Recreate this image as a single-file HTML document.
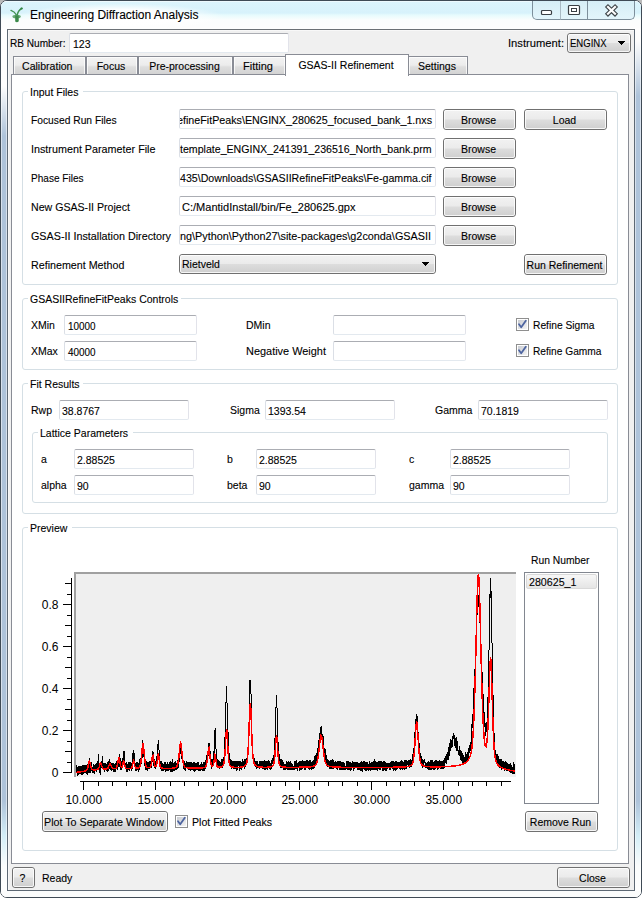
<!DOCTYPE html>
<html><head><meta charset="utf-8"><style>
html,body{margin:0;padding:0;width:642px;height:898px;overflow:hidden;background:linear-gradient(180deg,#b8b8b8 0px,#d8d8d8 20px,#fff 40px)}
*{box-sizing:border-box}
.t{position:absolute;font-family:"Liberation Sans",sans-serif;line-height:1;white-space:pre;color:#000;-webkit-text-stroke:0.1px #000}
.fit{display:inline-block;transform-origin:0 0}
#win{position:absolute;left:0;top:0;width:642px;height:898px;border:1px solid #3f4a55;border-radius:7px 7px 7px 7px;background:#fff;overflow:hidden}
#title{position:absolute;left:0;top:0;width:640px;height:28px;background:linear-gradient(180deg,#ffffff 0px,#dcf4fc 1px,#d7f2fb 12px,#e6fbfd 14px,#fbfdfd 19px,#fdfdfd 27px,#ffffff 28px)}
.strip{position:absolute;top:0;width:6px;height:898px;border-left:1px solid rgba(255,255,255,.5);border-right:1px solid rgba(255,255,255,.5)}
#sl{left:0;background:linear-gradient(180deg,#ffffff 0px,#fdfdfd 85px,#aec3da 135px,#aec3da 800px,#d4eef7 835px,#fafcfc 865px,#ffffff 898px)}
#sr{left:634px;background:linear-gradient(180deg,#ffffff 0px,#fdfdfd 40px,#aec3da 95px,#aec3da 800px,#d4eef7 835px,#fafcfc 865px,#ffffff 898px)}
#sb{position:absolute;left:0;top:890px;width:640px;height:6px;background:#fbfcfc}
#client{position:absolute;left:7px;top:29px;width:628px;height:862px;border:1px solid #5d6874;border-top-color:#6b7075;background:#f0f0f0;box-shadow:inset 1px 1px 0 #f8f8f8}
.pane{border:1px solid #898c95;background:#fff}
.tab{border:1px solid #898c95;border-bottom:none;background:linear-gradient(180deg,#f3f3f3 0%,#ececec 45%,#dedede 55%,#d2d2d2 100%)}
.ti{position:absolute;left:0;top:0;right:0;bottom:0;border:1px solid rgba(255,255,255,.75);border-bottom:none}
.tabsel{border:1px solid #898c95;border-bottom:none;background:#fff}
.grp{border:1px solid #d5dfe5;border-radius:3px}
.fld{border:1px solid;border-color:#abadb3 #e2e3ea #e3e9ef #dbdfe6;border-radius:2px;background:#fff}
.btn{border:1px solid #707070;border-radius:3px;background:linear-gradient(180deg,#f2f2f2 0%,#ebebeb 48%,#dddddd 52%,#cfcfcf 100%)}
.bi{position:absolute;left:0;top:0;right:0;bottom:0;border:1px solid rgba(255,255,255,.8);border-radius:2px}
.lst{border:1px solid #828790;background:#fff}
.item{border:1px solid #d9d9d9;border-radius:2px;background:linear-gradient(180deg,#f7f7f7,#e5e5e5)}
.cap{position:absolute;top:1px;height:19px;border:1px solid #7d8f9b;border-top:none;background:linear-gradient(180deg,#d6eef6,#e3f5fb)}
</style></head><body>
<div id="win"><div class="strip" id="sl"></div><div class="strip" id="sr"></div><div id="sb"></div><div id="title"></div><div style="position:absolute;left:14px;top:1px;width:210px;height:28px;background:radial-gradient(ellipse 50% 50% at 50% 55%,rgba(255,255,255,.95) 55%,rgba(255,255,255,0) 100%)"></div></div>
<div id="client"></div>
<svg width="0" height="0" style="position:absolute"><defs><linearGradient id="cbg" x1="0" y1="0" x2="1" y2="1"><stop offset="0" stop-color="#c9ccd2"/><stop offset="1" stop-color="#f4f4f4"/></linearGradient></defs></svg>
<div class="cap" style="left:532px;width:29px;border-radius:0 0 0 5px"></div>
<div class="cap" style="left:560px;width:28px;border-left:1px solid #a9bac4"></div>
<div class="cap" style="left:587px;width:48px;border-radius:0 0 5px 0"></div>
<svg style="position:absolute;left:540px;top:9px" width="14" height="7"><rect x="1.5" y="1.5" width="10" height="4" rx="1" fill="#fff" stroke="#3a3f44" stroke-width="1.2"/></svg>
<svg style="position:absolute;left:567px;top:4px" width="15" height="12"><rect x="1.5" y="1.5" width="11" height="9" rx="1" fill="#fff" stroke="#3a3f44" stroke-width="1.2"/><rect x="4.5" y="4.5" width="5" height="3" fill="none" stroke="#3a3f44" stroke-width="1"/></svg>
<svg style="position:absolute;left:603px;top:3px" width="17" height="15"><path d="M5 4 L12 10.8 M12 4 L5 10.8" stroke="#3d4347" stroke-width="4.4" stroke-linecap="square"/><path d="M5 4 L12 10.8 M12 4 L5 10.8" stroke="#fdfdfd" stroke-width="2.2" stroke-linecap="square"/></svg>
<svg style="position:absolute;left:6px;top:4px" width="24" height="24"><path d="M5 6.4 Q8.6 7.6 10.4 11" fill="none" stroke="#3f9150" stroke-width="1.4" stroke-linecap="round"/><path d="M15.8 4.3 Q12 6.5 11.2 11" fill="none" stroke="#3f9150" stroke-width="1.5" stroke-linecap="round"/><ellipse cx="15.6" cy="4.5" rx="1.2" ry="0.9" fill="#2f8544"/><ellipse cx="10.6" cy="12.6" rx="4.2" ry="1.9" fill="#4f9a5c" opacity="0.85"/><path d="M9.2 11.5 H12.6 L12.8 17.3 Q11 18.8 9.2 17.6 Z" fill="#3b8a4a"/></svg>
<div class="t" style="left:30px;top:8.54px;font-size:12px">Engineering Diffraction Analysis</div><div class="tab" style="position:absolute;left:13px;top:56px;width:73px;height:19px;"><div class="ti"></div></div>
<div class="t" style="left:21.7px;top:60.51px;font-size:10.5px;color:#000;"><span class="fit" style="transform:scaleX(1.00591)">Calibration</span></div>
<div class="tab" style="position:absolute;left:86px;top:56px;width:52px;height:19px;"><div class="ti"></div></div>
<div class="t" style="left:-39.0px;width:300px;text-align:center;top:60.51px;font-size:10.5px;color:#000;">Focus</div>
<div class="tab" style="position:absolute;left:138px;top:56px;width:95px;height:19px;"><div class="ti"></div></div>
<div class="t" style="left:34.5px;width:300px;text-align:center;top:60.51px;font-size:10.5px;color:#000;">Pre-processing</div>
<div class="tab" style="position:absolute;left:233px;top:56px;width:53px;height:19px;"><div class="ti"></div></div>
<div class="t" style="left:243.4px;top:60.51px;font-size:10.5px;color:#000;"><span class="fit" style="transform:scaleX(1.04918)">Fitting</span></div>
<div class="tab" style="position:absolute;left:408px;top:56px;width:60px;height:19px;"><div class="ti"></div></div>
<div class="t" style="left:287.0px;width:300px;text-align:center;top:60.51px;font-size:10.5px;color:#000;">Settings</div>
<div class="pane" style="position:absolute;left:11px;top:74px;width:618px;height:790px;"></div>
<div class="tabsel" style="position:absolute;left:285px;top:54px;width:124px;height:22px;"></div>
<div class="t" style="left:196.0px;width:300px;text-align:center;top:59.51px;font-size:10.5px;color:#000;">GSAS-II Refinement</div>
<div class="t" style="left:10px;top:37.51px;font-size:10.5px;color:#000;"><span class="fit" style="transform:scaleX(0.960779)">RB Number:</span></div>
<div class="fld" style="position:absolute;left:69px;top:33px;width:220px;height:20px;"></div>
<div class="t" style="left:73px;top:38.51px;font-size:10.5px;color:#000;">123</div>
<div class="t" style="left:508px;top:37.51px;font-size:10.5px;color:#000;"><span class="fit" style="transform:scaleX(1.06603)">Instrument:</span></div>
<div class="btn" style="position:absolute;left:567px;top:33px;width:64px;height:20px;"><div class="bi"></div></div>
<div class="t" style="left:570px;top:37.51px;font-size:10.5px;color:#000;"><span class="fit" style="transform:scaleX(0.90648)">ENGINX</span></div>
<svg style="position:absolute;left:618px;top:41px" width="8" height="5" shape-rendering="crispEdges"><path d="M0 0 H7 V1 H6 V2 H5 V3 H4 V4 H3 V3 H2 V2 H1 V1 H0 Z" fill="#000"/></svg>
<div class="grp" style="position:absolute;left:22px;top:91px;width:596px;height:194px;"></div>
<div class="" style="position:absolute;left:28px;top:90px;width:55px;height:3px;background:#fff"></div>
<div class="t" style="left:30px;top:86.51px;font-size:10.5px;color:#000;">Input Files</div>
<div class="t" style="left:31px;top:114.51px;font-size:10.5px;color:#000;"><span class="fit" style="transform:scaleX(0.977762)">Focused Run Files</span></div>
<div class="fld" style="position:absolute;left:179px;top:109px;width:257px;height:20px;"></div>
<div style="position:absolute;left:180px;top:110px;width:255px;height:18px;overflow:hidden"><div class="t" style="left:-3.5px;top:4.51px;font-size:10.5px"><span class="fit" style="transform:scaleX(1.0207)">efineFitPeaks\ENGINX_280625_focused_bank_1.nxs</span></div></div>
<div class="btn" style="position:absolute;left:443px;top:109px;width:73px;height:21px;"><div class="bi"></div></div>
<div class="t" style="left:328.5px;width:300px;text-align:center;top:114.51px;font-size:10.5px;color:#000;">Browse</div>
<div class="t" style="left:31px;top:143.51px;font-size:10.5px;color:#000;"><span class="fit" style="transform:scaleX(1.02561)">Instrument Parameter File</span></div>
<div class="fld" style="position:absolute;left:179px;top:138px;width:257px;height:20px;"></div>
<div style="position:absolute;left:180px;top:139px;width:255px;height:18px;overflow:hidden"><div class="t" style="left:0px;top:4.51px;font-size:10.5px"><span class="fit" style="transform:scaleX(1.00903)">template_ENGINX_241391_236516_North_bank.prm</span></div></div>
<div class="btn" style="position:absolute;left:443px;top:138px;width:73px;height:21px;"><div class="bi"></div></div>
<div class="t" style="left:328.5px;width:300px;text-align:center;top:143.51px;font-size:10.5px;color:#000;">Browse</div>
<div class="t" style="left:31px;top:172.51px;font-size:10.5px;color:#000;"><span class="fit" style="transform:scaleX(0.956992)">Phase Files</span></div>
<div class="fld" style="position:absolute;left:179px;top:167px;width:257px;height:20px;"></div>
<div style="position:absolute;left:180px;top:168px;width:255px;height:18px;overflow:hidden"><div class="t" style="left:0px;top:4.51px;font-size:10.5px"><span class="fit" style="transform:scaleX(1.01163)">435\Downloads\GSASIIRefineFitPeaks\Fe-gamma.cif</span></div></div>
<div class="btn" style="position:absolute;left:443px;top:167px;width:73px;height:21px;"><div class="bi"></div></div>
<div class="t" style="left:328.5px;width:300px;text-align:center;top:172.51px;font-size:10.5px;color:#000;">Browse</div>
<div class="t" style="left:31px;top:201.51px;font-size:10.5px;color:#000;"><span class="fit" style="transform:scaleX(1.00988)">New GSAS-II Project</span></div>
<div class="fld" style="position:absolute;left:179px;top:196px;width:257px;height:20px;"></div>
<div class="t" style="left:182px;top:201.51px;font-size:10.5px;color:#000;"><span class="fit" style="transform:scaleX(1.05032)">C:/MantidInstall/bin/Fe_280625.gpx</span></div>
<div class="btn" style="position:absolute;left:443px;top:196px;width:73px;height:21px;"><div class="bi"></div></div>
<div class="t" style="left:328.5px;width:300px;text-align:center;top:201.51px;font-size:10.5px;color:#000;">Browse</div>
<div class="t" style="left:31px;top:230.51px;font-size:10.5px;color:#000;"><span class="fit" style="transform:scaleX(1.02529)">GSAS-II Installation Directory</span></div>
<div class="fld" style="position:absolute;left:179px;top:225px;width:257px;height:20px;"></div>
<div style="position:absolute;left:180px;top:226px;width:255px;height:18px;overflow:hidden"><div class="t" style="left:0px;top:4.51px;font-size:10.5px"><span class="fit" style="transform:scaleX(1.03113)">ng\Python\Python27\site-packages\g2conda\GSASII</span></div></div>
<div class="btn" style="position:absolute;left:443px;top:225px;width:73px;height:21px;"><div class="bi"></div></div>
<div class="t" style="left:328.5px;width:300px;text-align:center;top:230.51px;font-size:10.5px;color:#000;">Browse</div>
<div class="btn" style="position:absolute;left:524px;top:109px;width:83px;height:21px;"><div class="bi"></div></div>
<div class="t" style="left:414.5px;width:300px;text-align:center;top:114.51px;font-size:10.5px;color:#000;">Load</div>
<div class="t" style="left:31px;top:259.51px;font-size:10.5px;color:#000;"><span class="fit" style="transform:scaleX(1.0192)">Refinement Method</span></div>
<div class="btn" style="position:absolute;left:179px;top:254px;width:257px;height:20px;"><div class="bi"></div></div>
<div class="t" style="left:182px;top:258.51px;font-size:10.5px;color:#000;">Rietveld</div>
<svg style="position:absolute;left:422px;top:262px" width="8" height="5" shape-rendering="crispEdges"><path d="M0 0 H7 V1 H6 V2 H5 V3 H4 V4 H3 V3 H2 V2 H1 V1 H0 Z" fill="#000"/></svg>
<div class="btn" style="position:absolute;left:524px;top:254px;width:83px;height:21px;"><div class="bi"></div></div>
<div class="t" style="left:414.5px;width:300px;text-align:center;top:259.51px;font-size:10.5px;color:#000;">Run Refinement</div>
<div class="grp" style="position:absolute;left:22px;top:298px;width:596px;height:72px;"></div>
<div class="" style="position:absolute;left:28px;top:297px;width:153px;height:3px;background:#fff"></div>
<div class="t" style="left:30px;top:293.51px;font-size:10.5px;color:#000;">GSASIIRefineFitPeaks Controls</div>
<div class="t" style="left:31px;top:319.51px;font-size:10.5px;color:#000;">XMin</div>
<div class="fld" style="position:absolute;left:64px;top:315px;width:133px;height:20px;"></div>
<div class="t" style="left:68px;top:320.51px;font-size:10.5px;color:#000;"><span class="fit" style="transform:scaleX(0.945104)">10000</span></div>
<div class="t" style="left:31px;top:345.51px;font-size:10.5px;color:#000;">XMax</div>
<div class="fld" style="position:absolute;left:64px;top:341px;width:133px;height:20px;"></div>
<div class="t" style="left:68px;top:346.51px;font-size:10.5px;color:#000;"><span class="fit" style="transform:scaleX(0.945104)">40000</span></div>
<div class="t" style="left:246px;top:319.51px;font-size:10.5px;color:#000;">DMin</div>
<div class="fld" style="position:absolute;left:333px;top:315px;width:133px;height:20px;"></div>
<div class="t" style="left:246px;top:345.51px;font-size:10.5px;color:#000;"><span class="fit" style="transform:scaleX(1.04086)">Negative Weight</span></div>
<div class="fld" style="position:absolute;left:333px;top:341px;width:133px;height:20px;"></div>
<svg style="position:absolute;left:516px;top:318px" width="13" height="13" viewBox="0 0 13 13" shape-rendering="crispEdges">
<rect x="0.5" y="0.5" width="12" height="12" fill="#fff" stroke="#8f8f8f"/>
<rect x="2" y="2" width="9" height="9" fill="url(#cbg)"/>
<path d="M3 6.3 L5.2 9.3 L9.8 2.8" fill="none" stroke="#4d64a0" stroke-width="1.8" stroke-linejoin="round" stroke-linecap="round" shape-rendering="auto"/>
</svg>
<div class="t" style="left:533px;top:319.51px;font-size:10.5px;color:#000;"><span class="fit" style="transform:scaleX(0.975706)">Refine Sigma</span></div>
<svg style="position:absolute;left:516px;top:344px" width="13" height="13" viewBox="0 0 13 13" shape-rendering="crispEdges">
<rect x="0.5" y="0.5" width="12" height="12" fill="#fff" stroke="#8f8f8f"/>
<rect x="2" y="2" width="9" height="9" fill="url(#cbg)"/>
<path d="M3 6.3 L5.2 9.3 L9.8 2.8" fill="none" stroke="#4d64a0" stroke-width="1.8" stroke-linejoin="round" stroke-linecap="round" shape-rendering="auto"/>
</svg>
<div class="t" style="left:533px;top:345.51px;font-size:10.5px;color:#000;"><span class="fit" style="transform:scaleX(0.970126)">Refine Gamma</span></div>
<div class="grp" style="position:absolute;left:22px;top:383px;width:596px;height:131px;"></div>
<div class="" style="position:absolute;left:28px;top:382px;width:55px;height:3px;background:#fff"></div>
<div class="t" style="left:30px;top:378.51px;font-size:10.5px;color:#000;">Fit Results</div>
<div class="t" style="left:31px;top:404.51px;font-size:10.5px;color:#000;">Rwp</div>
<div class="fld" style="position:absolute;left:59px;top:400px;width:130px;height:20px;"></div>
<div class="t" style="left:62px;top:405.51px;font-size:10.5px;color:#000;">38.8767</div>
<div class="t" style="left:230px;top:404.51px;font-size:10.5px;color:#000;">Sigma</div>
<div class="fld" style="position:absolute;left:265px;top:400px;width:130px;height:20px;"></div>
<div class="t" style="left:268px;top:405.51px;font-size:10.5px;color:#000;">1393.54</div>
<div class="t" style="left:435px;top:404.51px;font-size:10.5px;color:#000;">Gamma</div>
<div class="fld" style="position:absolute;left:478px;top:400px;width:130px;height:20px;"></div>
<div class="t" style="left:481px;top:405.51px;font-size:10.5px;color:#000;">70.1819</div>
<div class="grp" style="position:absolute;left:32px;top:432px;width:576px;height:71px;"></div>
<div class="" style="position:absolute;left:38px;top:431px;width:95px;height:3px;background:#fff"></div>
<div class="t" style="left:40px;top:427.51px;font-size:10.5px;color:#000;">Lattice Parameters</div>
<div class="t" style="left:41px;top:453.51px;font-size:10.5px;color:#000;">a</div>
<div class="fld" style="position:absolute;left:74px;top:449px;width:120px;height:20px;"></div>
<div class="t" style="left:77px;top:454.51px;font-size:10.5px;color:#000;">2.88525</div>
<div class="t" style="left:41px;top:479.51px;font-size:10.5px;color:#000;">alpha</div>
<div class="fld" style="position:absolute;left:74px;top:475px;width:120px;height:20px;"></div>
<div class="t" style="left:77px;top:480.51px;font-size:10.5px;color:#000;">90</div>
<div class="t" style="left:227px;top:453.51px;font-size:10.5px;color:#000;">b</div>
<div class="fld" style="position:absolute;left:256px;top:449px;width:120px;height:20px;"></div>
<div class="t" style="left:259px;top:454.51px;font-size:10.5px;color:#000;">2.88525</div>
<div class="t" style="left:227px;top:479.51px;font-size:10.5px;color:#000;">beta</div>
<div class="fld" style="position:absolute;left:256px;top:475px;width:120px;height:20px;"></div>
<div class="t" style="left:259px;top:480.51px;font-size:10.5px;color:#000;">90</div>
<div class="t" style="left:409px;top:453.51px;font-size:10.5px;color:#000;">c</div>
<div class="fld" style="position:absolute;left:450px;top:449px;width:120px;height:20px;"></div>
<div class="t" style="left:453px;top:454.51px;font-size:10.5px;color:#000;">2.88525</div>
<div class="t" style="left:409px;top:479.51px;font-size:10.5px;color:#000;">gamma</div>
<div class="fld" style="position:absolute;left:450px;top:475px;width:120px;height:20px;"></div>
<div class="t" style="left:453px;top:480.51px;font-size:10.5px;color:#000;">90</div>
<div class="grp" style="position:absolute;left:22px;top:527px;width:596px;height:324px;"></div>
<div class="" style="position:absolute;left:28px;top:526px;width:44px;height:3px;background:#fff"></div>
<div class="t" style="left:30px;top:522.51px;font-size:10.5px;color:#000;">Preview</div>
<div class="t" style="left:531px;top:554.51px;font-size:10.5px;color:#000;"><span class="fit" style="transform:scaleX(0.982677)">Run Number</span></div>
<div class="lst" style="position:absolute;left:524px;top:572px;width:75px;height:232px;"></div>
<div class="item" style="position:absolute;left:526px;top:574px;width:71px;height:15px;"></div>
<div class="t" style="left:529px;top:576.51px;font-size:10.5px;color:#000;"><span class="fit" style="transform:scaleX(1.01672)">280625_1</span></div>
<div class="btn" style="position:absolute;left:525px;top:811px;width:73px;height:21px;"><div class="bi"></div></div>
<div class="t" style="left:410.5px;width:300px;text-align:center;top:816.51px;font-size:10.5px;color:#000;">Remove Run</div>
<div class="btn" style="position:absolute;left:42px;top:811px;width:126px;height:21px;"><div class="bi"></div></div>
<div class="t" style="left:44px;top:816.51px;font-size:10.5px;color:#000;"><span class="fit" style="transform:scaleX(1.01938)">Plot To Separate Window</span></div>
<svg style="position:absolute;left:175px;top:815px" width="13" height="13" viewBox="0 0 13 13" shape-rendering="crispEdges">
<rect x="0.5" y="0.5" width="12" height="12" fill="#fff" stroke="#8f8f8f"/>
<rect x="2" y="2" width="9" height="9" fill="url(#cbg)"/>
<path d="M3 6.3 L5.2 9.3 L9.8 2.8" fill="none" stroke="#4d64a0" stroke-width="1.8" stroke-linejoin="round" stroke-linecap="round" shape-rendering="auto"/>
</svg>
<div class="t" style="left:192px;top:816.51px;font-size:10.5px;color:#000;"><span class="fit" style="transform:scaleX(1.00787)">Plot Fitted Peaks</span></div>
<div class="btn" style="position:absolute;left:12px;top:867px;width:23px;height:21px;"><div class="bi"></div></div>
<div class="t" style="left:-127.5px;width:300px;text-align:center;top:872.51px;font-size:10.5px;color:#000;">?</div>
<div class="t" style="left:42px;top:872.51px;font-size:10.5px;color:#000;">Ready</div>
<div class="btn" style="position:absolute;left:557px;top:867px;width:73px;height:21px;"><div class="bi"></div></div>
<div class="t" style="left:442.5px;width:300px;text-align:center;top:872.51px;font-size:10.5px;color:#000;">Close</div><svg style="position:absolute;left:0;top:0" width="642" height="898"><g font-family="Liberation Sans" font-size="12"><rect x="74" y="572" width="442" height="205" fill="#efefef"/><rect x="74" y="572" width="442" height="2" fill="#a0a0a0"/><rect x="74" y="572" width="2" height="205" fill="#a0a0a0"/><rect x="71" y="578" width="1" height="195" fill="#000"/><rect x="63" y="772" width="8" height="1" fill="#000"/><rect x="67" y="762" width="4" height="1" fill="#000"/><rect x="65" y="751" width="6" height="1" fill="#000"/><rect x="67" y="741" width="4" height="1" fill="#000"/><rect x="63" y="730" width="8" height="1" fill="#000"/><rect x="67" y="720" width="4" height="1" fill="#000"/><rect x="65" y="709" width="6" height="1" fill="#000"/><rect x="67" y="699" width="4" height="1" fill="#000"/><rect x="63" y="688" width="8" height="1" fill="#000"/><rect x="67" y="678" width="4" height="1" fill="#000"/><rect x="65" y="667" width="6" height="1" fill="#000"/><rect x="67" y="657" width="4" height="1" fill="#000"/><rect x="63" y="646" width="8" height="1" fill="#000"/><rect x="67" y="636" width="4" height="1" fill="#000"/><rect x="65" y="625" width="6" height="1" fill="#000"/><rect x="67" y="615" width="4" height="1" fill="#000"/><rect x="63" y="604" width="8" height="1" fill="#000"/><rect x="67" y="594" width="4" height="1" fill="#000"/><rect x="65" y="583" width="6" height="1" fill="#000"/><text x="58.5" y="776.9" text-anchor="end">0</text><text x="58.5" y="734.9" text-anchor="end">0.2</text><text x="58.5" y="692.9" text-anchor="end">0.4</text><text x="58.5" y="650.9" text-anchor="end">0.6</text><text x="58.5" y="608.9" text-anchor="end">0.8</text><rect x="80" y="781" width="431" height="1" fill="#000"/><rect x="83" y="781" width="1" height="9" fill="#000"/><rect x="98" y="781" width="1" height="5" fill="#000"/><rect x="112" y="781" width="1" height="5" fill="#000"/><rect x="126" y="781" width="1" height="5" fill="#000"/><rect x="141" y="781" width="1" height="5" fill="#000"/><rect x="155" y="781" width="1" height="9" fill="#000"/><rect x="170" y="781" width="1" height="5" fill="#000"/><rect x="184" y="781" width="1" height="5" fill="#000"/><rect x="198" y="781" width="1" height="5" fill="#000"/><rect x="213" y="781" width="1" height="5" fill="#000"/><rect x="227" y="781" width="1" height="9" fill="#000"/><rect x="242" y="781" width="1" height="5" fill="#000"/><rect x="256" y="781" width="1" height="5" fill="#000"/><rect x="270" y="781" width="1" height="5" fill="#000"/><rect x="285" y="781" width="1" height="5" fill="#000"/><rect x="299" y="781" width="1" height="9" fill="#000"/><rect x="314" y="781" width="1" height="5" fill="#000"/><rect x="328" y="781" width="1" height="5" fill="#000"/><rect x="342" y="781" width="1" height="5" fill="#000"/><rect x="357" y="781" width="1" height="5" fill="#000"/><rect x="371" y="781" width="1" height="9" fill="#000"/><rect x="386" y="781" width="1" height="5" fill="#000"/><rect x="400" y="781" width="1" height="5" fill="#000"/><rect x="414" y="781" width="1" height="5" fill="#000"/><rect x="429" y="781" width="1" height="5" fill="#000"/><rect x="443" y="781" width="1" height="9" fill="#000"/><rect x="458" y="781" width="1" height="5" fill="#000"/><rect x="472" y="781" width="1" height="5" fill="#000"/><rect x="486" y="781" width="1" height="5" fill="#000"/><rect x="501" y="781" width="1" height="5" fill="#000"/><text x="83.8" y="804" text-anchor="middle">10.000</text><text x="155.8" y="804" text-anchor="middle">15.000</text><text x="227.8" y="804" text-anchor="middle">20.000</text><text x="299.8" y="804" text-anchor="middle">25.000</text><text x="371.8" y="804" text-anchor="middle">30.000</text><text x="443.8" y="804" text-anchor="middle">35.000</text><polyline points="76.00,769.21 76.12,772.47 76.24,771.31 76.36,766.51 76.48,766.29 76.60,766.60 76.72,770.13 76.84,767.11 76.96,772.14 77.08,771.62 77.20,775.60 77.32,774.41 77.44,767.24 77.56,768.87 77.68,767.57 77.80,772.15 77.92,771.22 78.04,766.32 78.16,772.52 78.28,768.84 78.40,770.21 78.52,773.62 78.64,768.09 78.76,770.89 78.88,772.92 79.00,775.42 79.12,769.77 79.24,767.09 79.36,765.95 79.48,773.20 79.60,774.30 79.72,772.48 79.84,771.31 79.96,773.90 80.08,770.22 80.20,766.06 80.32,771.92 80.44,773.66 80.56,769.27 80.68,765.61 80.80,767.06 80.92,765.95 81.04,766.64 81.16,769.25 81.28,766.12 81.40,770.80 81.52,773.50 81.64,768.06 81.76,768.85 81.88,774.84 82.00,766.98 82.12,767.54 82.24,771.10 82.36,765.20 82.48,768.86 82.60,774.70 82.72,770.29 82.84,771.89 82.96,774.12 83.08,773.85 83.20,768.99 83.32,766.07 83.44,765.64 83.56,767.09 83.68,768.40 83.80,764.96 83.92,765.96 84.04,765.18 84.16,771.09 84.28,767.43 84.40,768.54 84.52,773.40 84.64,769.53 84.76,765.67 84.88,768.24 85.00,773.14 85.12,764.98 85.24,770.06 85.36,770.19 85.48,770.02 85.60,773.40 85.72,767.27 85.84,766.29 85.96,769.98 86.08,767.89 86.20,772.77 86.32,773.17 86.44,772.79 86.56,766.69 86.68,767.97 86.80,764.54 86.92,766.87 87.04,774.06 87.16,773.82 87.28,773.97 87.40,766.11 87.52,765.74 87.64,770.24 87.76,772.51 87.88,770.35 88.00,763.84 88.12,773.05 88.24,771.11 88.36,764.25 88.48,765.87 88.60,773.46 88.72,766.32 88.84,770.21 88.96,762.51 89.08,772.32 89.20,762.46 89.32,773.22 89.44,765.01 89.56,758.28 89.68,768.95 89.80,772.63 89.92,771.89 90.04,763.73 90.16,764.92 90.28,768.64 90.40,766.78 90.52,772.66 90.64,767.52 90.76,772.70 90.88,772.90 91.00,768.68 91.12,763.18 91.24,761.69 91.36,765.07 91.48,771.00 91.60,766.84 91.72,769.28 91.84,764.64 91.96,766.15 92.08,771.57 92.20,769.41 92.32,773.01 92.44,769.94 92.56,768.91 92.68,768.30 92.80,768.55 92.92,770.79 93.04,773.25 93.16,769.36 93.28,772.19 93.40,764.90 93.52,764.40 93.64,764.39 93.76,771.56 93.88,765.19 94.00,770.28 94.12,772.51 94.24,765.81 94.36,767.60 94.48,773.54 94.60,765.18 94.72,768.73 94.84,765.49 94.96,768.11 95.08,765.92 95.20,769.74 95.32,764.09 95.44,771.35 95.56,764.45 95.68,763.76 95.80,766.06 95.92,767.56 96.04,771.53 96.16,764.74 96.28,768.95 96.40,764.05 96.52,770.06 96.64,763.77 96.76,769.40 96.88,763.71 97.00,763.42 97.12,767.22 97.24,768.03 97.36,764.76 97.48,767.06 97.60,762.01 97.72,760.55 97.84,762.48 97.96,766.61 98.08,762.46 98.20,757.71 98.32,754.27 98.44,760.61 98.56,759.63 98.68,755.48 98.80,760.60 98.92,766.62 99.04,763.82 99.16,770.28 99.28,769.49 99.40,768.08 99.52,765.38 99.64,763.26 99.76,770.88 99.88,764.15 100.00,772.59 100.12,770.67 100.24,765.35 100.36,768.20 100.48,768.07 100.60,774.77 100.72,769.33 100.84,774.61 100.96,764.46 101.08,767.87 101.20,764.13 101.32,761.34 101.44,761.87 101.56,760.66 101.68,762.94 101.80,765.26 101.92,766.30 102.04,765.02 102.16,760.15 102.28,767.51 102.40,764.21 102.52,756.03 102.64,767.43 102.76,766.27 102.88,760.18 103.00,765.18 103.12,769.12 103.24,767.21 103.36,768.62 103.48,764.18 103.60,763.40 103.72,763.27 103.84,768.01 103.96,768.76 104.08,764.02 104.20,770.07 104.32,767.93 104.44,763.21 104.56,765.11 104.68,765.26 104.80,764.66 104.92,772.44 105.04,766.46 105.16,769.50 105.28,768.83 105.40,763.40 105.52,765.17 105.64,765.68 105.76,762.73 105.88,765.31 106.00,769.58 106.12,765.52 106.24,767.27 106.36,763.76 106.48,764.56 106.60,769.64 106.72,770.83 106.84,767.05 106.96,764.59 107.08,764.56 107.20,763.82 107.32,772.08 107.44,770.69 107.56,771.33 107.68,764.49 107.80,767.05 107.92,761.90 108.04,766.46 108.16,763.02 108.28,764.71 108.40,761.09 108.52,770.04 108.64,770.83 108.76,770.37 108.88,764.06 109.00,771.10 109.12,763.28 109.24,761.90 109.36,759.41 109.48,761.35 109.60,760.60 109.72,763.72 109.84,761.80 109.96,768.36 110.08,765.08 110.20,769.17 110.32,766.44 110.44,766.79 110.56,767.26 110.68,761.77 110.80,769.85 110.92,764.67 111.04,762.94 111.16,771.04 111.28,767.60 111.40,766.72 111.52,762.65 111.64,763.33 111.76,766.63 111.88,771.12 112.00,766.40 112.12,763.82 112.24,765.48 112.36,764.49 112.48,767.96 112.60,769.85 112.72,766.45 112.84,766.10 112.96,762.92 113.08,772.15 113.20,767.44 113.32,771.10 113.44,765.10 113.56,766.42 113.68,772.03 113.80,771.21 113.92,762.71 114.04,771.43 114.16,766.13 114.28,771.73 114.40,771.00 114.52,764.87 114.64,763.92 114.76,769.23 114.88,769.62 115.00,770.04 115.12,767.87 115.24,770.19 115.36,771.57 115.48,765.30 115.60,764.74 115.72,769.25 115.84,762.82 115.96,767.99 116.08,764.27 116.20,762.02 116.32,766.55 116.44,768.35 116.56,766.49 116.68,763.98 116.80,768.59 116.92,761.21 117.04,767.88 117.16,763.15 117.28,770.06 117.40,759.97 117.52,763.81 117.64,760.85 117.76,766.54 117.88,759.84 118.00,760.51 118.12,758.96 118.24,764.90 118.36,766.84 118.48,756.76 118.60,759.29 118.72,765.89 118.84,758.55 118.96,766.09 119.08,754.26 119.20,758.94 119.32,765.53 119.44,767.32 119.56,759.47 119.68,767.37 119.80,757.03 119.92,761.69 120.04,761.65 120.16,758.41 120.28,762.79 120.40,760.67 120.52,761.95 120.64,768.85 120.76,764.91 120.88,765.54 121.00,770.35 121.12,764.66 121.24,761.28 121.36,769.39 121.48,761.45 121.60,761.65 121.72,763.54 121.84,769.99 121.96,763.31 122.08,766.60 122.20,767.27 122.32,758.84 122.44,768.38 122.56,768.00 122.68,759.29 122.80,766.47 122.92,758.83 123.04,758.13 123.16,763.00 123.28,760.39 123.40,759.71 123.52,756.23 123.64,752.10 123.76,758.11 123.88,750.96 124.00,752.42 124.12,750.84 124.24,755.69 124.36,763.62 124.48,757.49 124.60,756.76 124.72,764.72 124.84,760.36 124.96,765.34 125.08,767.32 125.20,766.93 125.32,769.17 125.44,766.63 125.56,768.64 125.68,763.80 125.80,763.00 125.92,767.46 126.04,765.70 126.16,766.90 126.28,770.01 126.40,771.91 126.52,766.72 126.64,770.45 126.76,762.40 126.88,763.23 127.00,771.86 127.12,771.45 127.24,770.82 127.36,764.73 127.48,771.65 127.60,768.14 127.72,764.34 127.84,763.58 127.96,764.73 128.08,768.72 128.20,762.30 128.32,769.00 128.44,765.32 128.56,770.17 128.68,762.82 128.80,766.15 128.92,768.60 129.04,763.82 129.16,766.28 129.28,765.25 129.40,765.29 129.52,765.73 129.64,770.82 129.76,765.77 129.88,769.42 130.00,762.13 130.12,766.32 130.24,766.12 130.36,766.65 130.48,762.12 130.60,768.40 130.72,762.79 130.84,765.60 130.96,763.27 131.08,767.02 131.20,762.76 131.32,769.75 131.44,763.46 131.56,770.94 131.68,766.06 131.80,770.41 131.92,769.92 132.04,768.75 132.16,767.91 132.28,763.29 132.40,767.20 132.52,759.67 132.64,762.04 132.76,756.43 132.88,762.27 133.00,752.87 133.12,760.40 133.24,760.38 133.36,756.49 133.48,756.26 133.60,753.36 133.72,753.64 133.84,754.51 133.96,750.08 134.08,757.05 134.20,761.54 134.32,759.06 134.44,760.40 134.56,757.57 134.68,758.19 134.80,763.63 134.92,765.67 135.04,767.24 135.16,765.34 135.28,765.62 135.40,770.51 135.52,769.74 135.64,768.61 135.76,763.23 135.88,766.37 136.00,770.75 136.12,769.50 136.24,762.22 136.36,769.25 136.48,770.69 136.60,769.89 136.72,766.74 136.84,763.78 136.96,766.80 137.08,762.07 137.20,763.33 137.32,768.55 137.44,763.40 137.56,762.85 137.68,768.09 137.80,770.47 137.92,767.50 138.04,762.68 138.16,767.96 138.28,769.63 138.40,771.56 138.52,765.15 138.64,765.95 138.76,768.96 138.88,769.69 139.00,767.81 139.12,767.21 139.24,763.27 139.36,762.63 139.48,765.41 139.60,770.03 139.72,763.09 139.84,758.77 139.96,761.51 140.08,762.51 140.20,766.03 140.32,766.11 140.44,760.68 140.56,761.41 140.68,759.38 140.80,767.05 140.92,761.47 141.04,756.56 141.16,761.74 141.28,761.81 141.40,764.14 141.52,755.40 141.64,751.91 141.76,754.88 141.88,749.54 142.00,747.66 142.12,757.59 142.24,747.29 142.36,749.90 142.48,752.70 142.60,745.36 142.72,741.24 142.84,750.22 142.96,739.90 143.08,749.55 143.20,749.82 143.32,743.75 143.44,744.66 143.56,746.99 143.68,752.60 143.80,753.97 143.92,753.27 144.04,757.32 144.16,752.37 144.28,761.70 144.40,760.02 144.52,755.57 144.64,764.47 144.76,758.54 144.88,759.40 145.00,766.38 145.12,764.70 145.24,768.28 145.36,767.28 145.48,767.88 145.60,766.84 145.72,762.83 145.84,766.35 145.96,769.53 146.08,760.65 146.20,770.04 146.32,762.13 146.44,761.23 146.56,767.36 146.68,768.49 146.80,767.07 146.92,769.43 147.04,770.22 147.16,770.03 147.28,770.84 147.40,763.40 147.52,761.70 147.64,769.58 147.76,769.73 147.88,764.32 148.00,762.42 148.12,763.51 148.24,765.73 148.36,764.05 148.48,768.68 148.60,764.70 148.72,766.54 148.84,767.69 148.96,765.61 149.08,769.24 149.20,768.53 149.32,763.57 149.44,762.26 149.56,761.43 149.68,769.01 149.80,761.24 149.92,766.14 150.04,762.93 150.16,764.49 150.28,763.48 150.40,763.57 150.52,767.70 150.64,761.35 150.76,760.77 150.88,766.96 151.00,765.88 151.12,763.04 151.24,767.90 151.36,767.40 151.48,759.21 151.60,766.43 151.72,759.75 151.84,757.27 151.96,760.02 152.08,761.97 152.20,756.25 152.32,753.09 152.44,758.91 152.56,752.11 152.68,759.61 152.80,751.09 152.92,761.04 153.04,752.35 153.16,759.37 153.28,752.99 153.40,754.88 153.52,759.01 153.64,757.42 153.76,765.84 153.88,756.33 154.00,757.08 154.12,767.68 154.24,765.39 154.36,759.99 154.48,759.51 154.60,762.93 154.72,763.37 154.84,766.72 154.96,766.28 155.08,761.34 155.20,764.18 155.32,769.43 155.44,766.03 155.56,764.46 155.68,767.50 155.80,767.95 155.92,768.63 156.04,766.31 156.16,762.70 156.28,760.16 156.40,766.82 156.52,764.72 156.64,761.90 156.76,763.18 156.88,762.78 157.00,756.26 157.12,761.44 157.24,756.68 157.36,749.75 157.48,749.23 157.60,756.56 157.72,744.43 157.84,747.98 157.96,745.98 158.08,748.78 158.20,742.59 158.32,739.79 158.44,742.58 158.56,740.11 158.68,744.56 158.80,745.33 158.92,744.12 159.04,751.08 159.16,752.24 159.28,752.65 159.40,762.43 159.52,755.90 159.64,759.15 159.76,757.49 159.88,765.70 160.00,762.89 160.12,761.00 160.24,762.85 160.36,768.07 160.48,764.79 160.60,765.88 160.72,769.00 160.84,769.33 160.96,764.64 161.08,765.26 161.20,761.07 161.32,763.98 161.44,764.26 161.56,765.61 161.68,767.99 161.80,770.76 161.92,762.01 162.04,770.61 162.16,762.94 162.28,766.90 162.40,771.17 162.52,764.14 162.64,763.09 162.76,769.48 162.88,763.24 163.00,769.68 163.12,770.70 163.24,769.61 163.36,770.76 163.48,770.22 163.60,768.77 163.72,769.28 163.84,770.70 163.96,764.51 164.08,763.26 164.20,762.46 164.32,763.33 164.44,766.89 164.56,767.04 164.68,766.60 164.80,768.58 164.92,765.68 165.04,771.55 165.16,768.31 165.28,762.22 165.40,768.78 165.52,765.26 165.64,767.07 165.76,770.95 165.88,769.15 166.00,765.35 166.12,765.63 166.24,767.23 166.36,764.08 166.48,766.20 166.60,770.26 166.72,770.27 166.84,767.02 166.96,767.05 167.08,768.54 167.20,765.29 167.32,764.98 167.44,768.34 167.56,762.38 167.68,770.85 167.80,762.48 167.92,762.04 168.04,771.21 168.16,768.57 168.28,771.09 168.40,768.16 168.52,768.95 168.64,768.80 168.76,768.66 168.88,769.61 169.00,763.79 169.12,769.73 169.24,768.54 169.36,770.21 169.48,767.59 169.60,764.98 169.72,765.15 169.84,768.38 169.96,762.49 170.08,762.34 170.20,770.07 170.32,771.15 170.44,762.07 170.56,767.86 170.68,771.76 170.80,766.05 170.92,768.38 171.04,762.42 171.16,768.76 171.28,771.59 171.40,770.62 171.52,762.06 171.64,764.31 171.76,763.75 171.88,769.63 172.00,770.45 172.12,762.69 172.24,768.96 172.36,771.20 172.48,771.51 172.60,758.98 172.72,770.02 172.84,764.92 172.96,763.45 173.08,766.66 173.20,765.46 173.32,766.16 173.44,763.19 173.56,765.38 173.68,768.04 173.80,765.58 173.92,771.19 174.04,767.37 174.16,762.26 174.28,768.71 174.40,764.95 174.52,771.44 174.64,767.63 174.76,765.87 174.88,765.32 175.00,767.57 175.12,769.62 175.24,761.46 175.36,765.68 175.48,769.63 175.60,761.77 175.72,769.52 175.84,767.05 175.96,769.84 176.08,768.11 176.20,764.63 176.32,766.67 176.44,763.02 176.56,770.39 176.68,767.00 176.80,765.46 176.92,763.20 177.04,768.57 177.16,761.20 177.28,768.07 177.40,765.90 177.52,768.85 177.64,764.36 177.76,761.07 177.88,760.63 178.00,762.15 178.12,762.14 178.24,758.94 178.36,767.53 178.48,757.28 178.60,764.08 178.72,761.29 178.84,759.66 178.96,753.32 179.08,761.95 179.20,757.61 179.32,759.17 179.44,760.24 179.56,757.78 179.68,749.93 179.80,748.30 179.92,745.89 180.04,751.04 180.16,749.08 180.28,754.34 180.40,749.92 180.52,743.49 180.64,745.24 180.76,750.37 180.88,751.09 181.00,748.74 181.12,755.99 181.24,747.32 181.36,748.65 181.48,757.58 181.60,757.68 181.72,757.99 181.84,757.27 181.96,751.29 182.08,760.36 182.20,760.31 182.32,760.17 182.44,755.52 182.56,757.97 182.68,761.11 182.80,759.09 182.92,761.23 183.04,759.72 183.16,767.94 183.28,768.37 183.40,768.22 183.52,763.90 183.64,769.16 183.76,766.27 183.88,763.49 184.00,765.08 184.12,761.80 184.24,761.06 184.36,766.25 184.48,769.58 184.60,764.98 184.72,763.63 184.84,764.34 184.96,765.99 185.08,770.22 185.20,771.03 185.32,770.22 185.44,763.33 185.56,764.13 185.68,763.30 185.80,771.31 185.92,770.67 186.04,764.27 186.16,761.96 186.28,764.36 186.40,761.58 186.52,764.88 186.64,761.48 186.76,766.79 186.88,765.88 187.00,763.71 187.12,762.92 187.24,769.30 187.36,763.54 187.48,762.45 187.60,766.56 187.72,763.66 187.84,768.72 187.96,767.47 188.08,762.28 188.20,765.73 188.32,762.20 188.44,765.02 188.56,770.34 188.68,761.82 188.80,766.46 188.92,764.35 189.04,770.03 189.16,763.33 189.28,765.10 189.40,766.17 189.52,762.91 189.64,769.90 189.76,764.93 189.88,765.54 190.00,762.33 190.12,771.29 190.24,766.87 190.36,767.12 190.48,771.44 190.60,763.56 190.72,764.25 190.84,762.04 190.96,768.75 191.08,761.92 191.20,767.52 191.32,768.79 191.44,770.47 191.56,762.20 191.68,766.70 191.80,764.55 191.92,765.82 192.04,767.69 192.16,763.23 192.28,769.24 192.40,770.03 192.52,765.65 192.64,770.17 192.76,765.72 192.88,769.54 193.00,764.16 193.12,766.12 193.24,769.81 193.36,769.92 193.48,762.29 193.60,771.35 193.72,764.25 193.84,768.09 193.96,767.07 194.08,766.09 194.20,761.96 194.32,771.46 194.44,771.13 194.56,769.85 194.68,770.61 194.80,768.17 194.92,768.54 195.04,767.17 195.16,767.96 195.28,766.95 195.40,771.26 195.52,764.79 195.64,762.94 195.76,771.30 195.88,764.41 196.00,767.07 196.12,762.96 196.24,764.66 196.36,764.60 196.48,762.59 196.60,770.12 196.72,767.42 196.84,763.72 196.96,766.32 197.08,767.83 197.20,764.80 197.32,763.91 197.44,765.52 197.56,761.80 197.68,770.31 197.80,767.25 197.92,764.52 198.04,764.63 198.16,763.25 198.28,770.39 198.40,762.27 198.52,766.05 198.64,762.74 198.76,771.25 198.88,763.18 199.00,765.16 199.12,767.80 199.24,769.84 199.36,769.01 199.48,769.22 199.60,769.46 199.72,770.76 199.84,767.01 199.96,767.45 200.08,771.22 200.20,765.75 200.32,770.30 200.44,765.35 200.56,766.13 200.68,764.46 200.80,767.09 200.92,764.74 201.04,770.02 201.16,765.94 201.28,764.53 201.40,767.24 201.52,762.34 201.64,764.69 201.76,769.84 201.88,763.47 202.00,769.41 202.12,767.06 202.24,770.62 202.36,766.77 202.48,766.53 202.60,768.20 202.72,764.89 202.84,764.81 202.96,768.06 203.08,762.23 203.20,765.25 203.32,766.97 203.44,770.88 203.56,765.58 203.68,771.15 203.80,766.43 203.92,762.78 204.04,770.89 204.16,766.16 204.28,769.98 204.40,769.19 204.52,769.84 204.64,762.40 204.76,765.94 204.88,762.61 205.00,767.03 205.12,764.15 205.24,766.95 205.36,764.58 205.48,763.42 205.60,760.22 205.72,768.64 205.84,766.71 205.96,764.78 206.08,762.18 206.20,764.65 206.32,764.79 206.44,759.70 206.56,765.94 206.68,758.49 206.80,762.37 206.92,762.67 207.04,752.62 207.16,757.87 207.28,757.23 207.40,755.16 207.52,761.26 207.64,753.66 207.76,752.78 207.88,757.49 208.00,757.07 208.12,751.66 208.24,743.22 208.36,752.36 208.48,752.06 208.60,743.73 208.72,751.86 208.84,751.66 208.96,744.64 209.08,743.02 209.20,752.20 209.32,752.11 209.44,745.52 209.56,746.99 209.68,749.59 209.80,748.85 209.92,753.35 210.04,750.90 210.16,760.72 210.28,755.23 210.40,756.65 210.52,754.83 210.64,758.94 210.76,763.50 210.88,759.43 211.00,758.44 211.12,766.26 211.24,759.53 211.36,765.63 211.48,768.26 211.60,768.33 211.72,761.02 211.84,760.11 211.96,761.48 212.08,764.82 212.20,761.33 212.32,760.93 212.44,759.92 212.56,764.05 212.68,766.20 212.80,764.79 212.92,760.90 213.04,758.15 213.16,765.49 213.28,762.85 213.40,760.91 213.52,759.17 213.64,753.18 213.76,753.26 213.88,756.77 214.00,751.16 214.12,753.01 214.24,751.48 214.36,741.86 214.48,743.92 214.60,737.17 214.72,738.57 214.84,731.31 214.96,731.24 215.08,728.44 215.20,738.22 215.32,736.74 215.44,730.00 215.56,734.41 215.68,739.38 215.80,741.36 215.92,742.64 216.04,749.88 216.16,748.77 216.28,755.81 216.40,750.28 216.52,760.40 216.64,754.00 216.76,761.18 216.88,758.35 217.00,764.82 217.12,766.70 217.24,758.66 217.36,762.22 217.48,766.97 217.60,759.68 217.72,763.27 217.84,766.15 217.96,767.67 218.08,763.96 218.20,766.53 218.32,764.72 218.44,760.90 218.56,760.10 218.68,767.84 218.80,765.26 218.92,766.21 219.04,762.33 219.16,763.43 219.28,761.87 219.40,761.23 219.52,766.61 219.64,762.30 219.76,764.34 219.88,763.39 220.00,768.74 220.12,765.49 220.24,768.00 220.36,767.43 220.48,766.46 220.60,764.36 220.72,768.04 220.84,762.55 220.96,761.67 221.08,762.37 221.20,766.55 221.32,760.57 221.44,764.08 221.56,760.98 221.68,759.32 221.80,766.69 221.92,766.26 222.04,764.61 222.16,763.74 222.28,760.60 222.40,758.63 222.52,764.91 222.64,767.69 222.76,760.59 222.88,759.24 223.00,765.45 223.12,760.32 223.24,763.48 223.36,766.06 223.48,764.18 223.60,763.24 223.72,756.92 223.84,757.58 223.96,759.08 224.08,760.94 224.20,751.50 224.32,756.15 224.44,755.24 224.56,755.79 224.68,748.73 224.80,743.90 224.92,738.45 225.04,735.94 225.16,741.19 225.28,726.62 225.40,723.91 225.52,717.03 225.64,722.32 225.76,712.33 225.88,710.43 226.00,702.90 226.12,698.95 226.24,700.37 226.36,689.14 226.48,691.02 226.60,689.20 226.72,686.38 226.84,692.97 226.96,701.42 227.08,705.73 227.20,705.38 227.32,703.03 227.44,714.55 227.56,718.93 227.68,722.64 227.80,725.16 227.92,736.23 228.04,732.44 228.16,739.08 228.28,744.80 228.40,746.94 228.52,749.06 228.64,749.97 228.76,749.72 228.88,755.32 229.00,760.05 229.12,753.33 229.24,756.00 229.36,760.00 229.48,760.92 229.60,760.92 229.72,757.02 229.84,757.39 229.96,765.80 230.08,764.60 230.20,758.78 230.32,765.18 230.44,766.49 230.56,760.00 230.68,764.14 230.80,759.98 230.92,759.32 231.04,759.85 231.16,761.14 231.28,766.24 231.40,768.16 231.52,768.09 231.64,768.63 231.76,761.16 231.88,762.98 232.00,766.47 232.12,760.92 232.24,767.16 232.36,767.06 232.48,765.93 232.60,765.43 232.72,761.09 232.84,766.79 232.96,761.99 233.08,768.51 233.20,761.27 233.32,761.27 233.44,762.05 233.56,763.14 233.68,764.08 233.80,769.07 233.92,767.23 234.04,767.83 234.16,761.87 234.28,769.14 234.40,760.76 234.52,768.63 234.64,764.38 234.76,762.04 234.88,764.42 235.00,766.61 235.12,763.80 235.24,769.48 235.36,760.96 235.48,764.16 235.60,766.33 235.72,761.37 235.84,763.91 235.96,765.18 236.08,761.04 236.20,767.32 236.32,763.34 236.44,763.23 236.56,765.90 236.68,770.55 236.80,766.23 236.92,769.36 237.04,766.96 237.16,764.26 237.28,768.59 237.40,770.03 237.52,763.67 237.64,768.03 237.76,766.99 237.88,766.14 238.00,761.22 238.12,763.85 238.24,765.44 238.36,763.05 238.48,764.08 238.60,760.65 238.72,765.11 238.84,766.26 238.96,762.25 239.08,763.57 239.20,767.83 239.32,769.93 239.44,769.76 239.56,761.32 239.68,766.32 239.80,764.07 239.92,764.78 240.04,761.15 240.16,769.47 240.28,763.02 240.40,762.08 240.52,767.48 240.64,764.40 240.76,766.43 240.88,766.86 241.00,767.70 241.12,766.35 241.24,768.42 241.36,763.70 241.48,762.14 241.60,769.02 241.72,769.47 241.84,763.46 241.96,766.67 242.08,766.94 242.20,760.67 242.32,760.52 242.44,763.39 242.56,766.00 242.68,760.83 242.80,765.58 242.92,760.44 243.04,767.11 243.16,760.73 243.28,761.17 243.40,760.59 243.52,763.89 243.64,765.50 243.76,766.14 243.88,762.79 244.00,761.99 244.12,767.01 244.24,762.37 244.36,769.02 244.48,761.90 244.60,768.49 244.72,759.01 244.84,765.43 244.96,762.37 245.08,760.91 245.20,759.39 245.32,759.71 245.44,763.29 245.56,759.91 245.68,761.60 245.80,759.52 245.92,766.86 246.04,757.61 246.16,759.53 246.28,761.86 246.40,759.99 246.52,760.82 246.64,764.94 246.76,762.75 246.88,761.32 247.00,762.95 247.12,759.15 247.24,761.97 247.36,757.98 247.48,752.95 247.60,753.51 247.72,749.56 247.84,752.43 247.96,754.17 248.08,747.40 248.20,748.02 248.32,738.72 248.44,741.66 248.56,732.79 248.68,735.32 248.80,728.99 248.92,722.11 249.04,722.67 249.16,718.13 249.28,712.26 249.40,700.33 249.52,705.77 249.64,689.37 249.76,693.67 249.88,683.52 250.00,680.08 250.12,685.74 250.24,680.31 250.36,685.20 250.48,689.58 250.60,681.85 250.72,690.41 250.84,691.45 250.96,694.45 251.08,693.69 251.20,701.95 251.32,704.30 251.44,709.23 251.56,714.41 251.68,718.56 251.80,726.89 251.92,729.25 252.04,739.30 252.16,734.95 252.28,745.40 252.40,741.62 252.52,744.10 252.64,744.04 252.76,749.92 252.88,748.13 253.00,755.76 253.12,755.99 253.24,761.62 253.36,759.85 253.48,756.58 253.60,764.02 253.72,758.61 253.84,756.67 253.96,755.73 254.08,765.51 254.20,762.64 254.32,759.18 254.44,758.19 254.56,765.20 254.68,757.97 254.80,760.95 254.92,763.39 255.04,764.59 255.16,766.78 255.28,764.27 255.40,760.78 255.52,766.03 255.64,765.83 255.76,764.05 255.88,765.67 256.00,765.27 256.12,761.27 256.24,761.77 256.36,763.94 256.48,764.50 256.60,761.54 256.72,768.71 256.84,764.71 256.96,767.68 257.08,761.28 257.20,764.23 257.32,767.97 257.44,768.42 257.56,763.57 257.68,768.00 257.80,761.37 257.92,760.89 258.04,767.96 258.16,764.48 258.28,763.93 258.40,766.97 258.52,764.83 258.64,767.67 258.76,766.91 258.88,765.33 259.00,763.85 259.12,762.37 259.24,765.90 259.36,761.99 259.48,762.97 259.60,762.66 259.72,761.17 259.84,768.89 259.96,764.53 260.08,766.50 260.20,760.76 260.32,764.02 260.44,763.31 260.56,766.86 260.68,763.91 260.80,766.19 260.92,762.32 261.04,767.55 261.16,767.09 261.28,761.14 261.40,764.24 261.52,765.42 261.64,768.04 261.76,766.40 261.88,765.10 262.00,764.64 262.12,769.41 262.24,765.41 262.36,768.76 262.48,767.92 262.60,760.91 262.72,766.06 262.84,768.23 262.96,762.73 263.08,768.71 263.20,761.41 263.32,766.18 263.44,767.35 263.56,765.37 263.68,767.45 263.80,766.38 263.92,768.72 264.04,761.99 264.16,761.76 264.28,763.29 264.40,763.67 264.52,769.14 264.64,765.65 264.76,761.04 264.88,769.21 265.00,769.11 265.12,762.55 265.24,765.90 265.36,765.17 265.48,766.36 265.60,768.54 265.72,769.71 265.84,761.01 265.96,765.83 266.08,766.15 266.20,763.22 266.32,763.39 266.44,768.50 266.56,765.01 266.68,764.91 266.80,761.02 266.92,766.84 267.04,769.07 267.16,766.39 267.28,769.64 267.40,768.41 267.52,767.13 267.64,763.32 267.76,768.75 267.88,769.53 268.00,761.33 268.12,768.16 268.24,764.44 268.36,762.85 268.48,767.13 268.60,760.79 268.72,760.62 268.84,763.13 268.96,766.00 269.08,765.76 269.20,769.26 269.32,768.53 269.44,768.08 269.56,763.96 269.68,763.81 269.80,762.20 269.92,760.87 270.04,767.20 270.16,766.67 270.28,768.13 270.40,769.04 270.52,769.16 270.64,762.59 270.76,767.16 270.88,768.91 271.00,764.38 271.12,765.45 271.24,760.26 271.36,762.03 271.48,767.74 271.60,768.46 271.72,765.09 271.84,762.43 271.96,765.48 272.08,762.10 272.20,761.12 272.32,760.30 272.44,761.36 272.56,763.85 272.68,763.60 272.80,763.85 272.92,757.92 273.04,758.31 273.16,758.36 273.28,760.26 273.40,763.02 273.52,757.50 273.64,758.59 273.76,763.47 273.88,755.20 274.00,761.78 274.12,756.66 274.24,751.34 274.36,750.20 274.48,751.95 274.60,746.49 274.72,744.06 274.84,741.65 274.96,741.41 275.08,732.53 275.20,734.13 275.32,731.10 275.44,722.91 275.56,717.63 275.68,711.70 275.80,713.34 275.92,713.95 276.04,706.39 276.16,703.54 276.28,702.74 276.40,695.33 276.52,704.56 276.64,700.52 276.76,704.74 276.88,707.24 277.00,708.05 277.12,709.27 277.24,709.46 277.36,721.68 277.48,719.07 277.60,723.29 277.72,728.40 277.84,740.92 277.96,742.40 278.08,742.42 278.20,749.90 278.32,749.58 278.44,751.80 278.56,755.55 278.68,756.57 278.80,752.27 278.92,758.88 279.04,754.40 279.16,763.59 279.28,762.37 279.40,763.59 279.52,760.37 279.64,764.38 279.76,759.81 279.88,762.51 280.00,758.56 280.12,765.62 280.24,766.35 280.36,760.05 280.48,760.61 280.60,767.55 280.72,765.69 280.84,766.55 280.96,765.65 281.08,767.19 281.20,759.84 281.32,767.48 281.44,765.13 281.56,764.74 281.68,759.46 281.80,767.54 281.92,765.52 282.04,762.87 282.16,763.11 282.28,765.83 282.40,760.54 282.52,766.75 282.64,766.39 282.76,761.00 282.88,760.25 283.00,761.72 283.12,769.53 283.24,762.20 283.36,766.10 283.48,763.97 283.60,769.63 283.72,769.99 283.84,768.43 283.96,763.88 284.08,769.62 284.20,768.29 284.32,763.72 284.44,765.75 284.56,765.38 284.68,769.56 284.80,766.94 284.92,766.53 285.04,769.90 285.16,766.94 285.28,764.09 285.40,767.12 285.52,765.34 285.64,770.15 285.76,768.74 285.88,765.98 286.00,767.93 286.12,767.72 286.24,760.77 286.36,761.80 286.48,769.37 286.60,766.34 286.72,760.93 286.84,767.96 286.96,763.29 287.08,763.40 287.20,764.71 287.32,767.00 287.44,767.28 287.56,770.16 287.68,767.44 287.80,762.15 287.92,768.80 288.04,764.01 288.16,765.71 288.28,762.17 288.40,762.26 288.52,761.09 288.64,764.40 288.76,770.20 288.88,763.67 289.00,762.55 289.12,764.97 289.24,763.19 289.36,764.45 289.48,763.26 289.60,769.69 289.72,768.98 289.84,768.39 289.96,762.12 290.08,765.31 290.20,767.32 290.32,763.36 290.44,769.80 290.56,763.50 290.68,763.21 290.80,761.03 290.92,766.29 291.04,770.03 291.16,763.06 291.28,766.11 291.40,767.41 291.52,768.71 291.64,763.70 291.76,770.31 291.88,767.55 292.00,764.58 292.12,768.06 292.24,764.56 292.36,764.13 292.48,769.36 292.60,765.85 292.72,769.66 292.84,764.02 292.96,764.77 293.08,769.16 293.20,766.41 293.32,766.37 293.44,769.09 293.56,769.02 293.68,767.35 293.80,765.64 293.92,769.63 294.04,768.85 294.16,769.43 294.28,767.68 294.40,766.76 294.52,761.30 294.64,768.88 294.76,762.75 294.88,761.56 295.00,770.38 295.12,764.22 295.24,761.34 295.36,760.98 295.48,762.00 295.60,761.20 295.72,766.17 295.84,761.01 295.96,761.71 296.08,766.91 296.20,763.92 296.32,762.78 296.44,762.69 296.56,768.70 296.68,760.90 296.80,760.88 296.92,764.84 297.04,766.90 297.16,766.45 297.28,765.72 297.40,762.85 297.52,770.56 297.64,770.21 297.76,770.46 297.88,765.36 298.00,765.12 298.12,767.67 298.24,763.99 298.36,764.60 298.48,762.51 298.60,765.73 298.72,762.54 298.84,762.52 298.96,766.16 299.08,770.30 299.20,770.05 299.32,767.78 299.44,761.16 299.56,760.66 299.68,767.77 299.80,763.17 299.92,762.16 300.04,770.46 300.16,760.96 300.28,764.08 300.40,768.58 300.52,761.53 300.64,762.05 300.76,765.24 300.88,769.65 301.00,765.28 301.12,761.79 301.24,766.15 301.36,762.59 301.48,760.70 301.60,767.61 301.72,770.32 301.84,767.83 301.96,768.62 302.08,760.17 302.20,766.34 302.32,760.56 302.44,768.35 302.56,760.89 302.68,765.81 302.80,763.69 302.92,769.33 303.04,766.86 303.16,762.88 303.28,764.27 303.40,766.36 303.52,762.42 303.64,766.29 303.76,767.50 303.88,761.08 304.00,760.94 304.12,764.41 304.24,767.55 304.36,766.90 304.48,765.11 304.60,769.49 304.72,760.99 304.84,770.26 304.96,764.29 305.08,768.61 305.20,767.78 305.32,761.27 305.44,768.38 305.56,760.80 305.68,769.65 305.80,767.04 305.92,766.70 306.04,762.92 306.16,760.45 306.28,761.30 306.40,767.39 306.52,768.35 306.64,765.38 306.76,768.13 306.88,765.87 307.00,765.79 307.12,765.24 307.24,766.16 307.36,760.95 307.48,765.64 307.60,760.90 307.72,760.37 307.84,768.29 307.96,761.33 308.08,762.18 308.20,761.19 308.32,765.56 308.44,761.00 308.56,768.59 308.68,761.04 308.80,763.05 308.92,761.48 309.04,769.83 309.16,760.03 309.28,761.08 309.40,765.96 309.52,764.50 309.64,766.04 309.76,769.11 309.88,767.88 310.00,768.27 310.12,760.11 310.24,768.36 310.36,768.62 310.48,769.25 310.60,766.84 310.72,762.72 310.84,762.93 310.96,764.10 311.08,766.21 311.20,767.28 311.32,769.59 311.44,762.28 311.56,763.65 311.68,761.77 311.80,768.73 311.92,767.17 312.04,768.34 312.16,764.67 312.28,767.61 312.40,765.55 312.52,764.59 312.64,760.72 312.76,765.63 312.88,768.50 313.00,768.20 313.12,768.68 313.24,760.93 313.36,766.15 313.48,765.91 313.60,760.32 313.72,765.44 313.84,765.95 313.96,760.77 314.08,758.39 314.20,760.13 314.32,767.74 314.44,763.78 314.56,763.70 314.68,760.51 314.80,755.81 314.92,758.48 315.04,761.91 315.16,763.71 315.28,764.34 315.40,757.13 315.52,760.08 315.64,760.17 315.76,756.20 315.88,758.47 316.00,754.83 316.12,756.52 316.24,762.24 316.36,754.68 316.48,762.50 316.60,759.42 316.72,758.96 316.84,752.86 316.96,761.41 317.08,757.26 317.20,751.97 317.32,749.03 317.44,749.62 317.56,751.53 317.68,748.29 317.80,748.81 317.92,751.11 318.04,747.20 318.16,746.81 318.28,751.51 318.40,744.05 318.52,745.39 318.64,747.54 318.76,749.37 318.88,746.05 319.00,740.02 319.12,741.56 319.24,740.92 319.36,735.55 319.48,739.40 319.60,735.46 319.72,733.20 319.84,735.42 319.96,741.91 320.08,730.24 320.20,738.11 320.32,739.12 320.44,738.43 320.56,739.06 320.68,729.56 320.80,737.32 320.92,726.93 321.04,737.69 321.16,735.11 321.28,731.51 321.40,728.40 321.52,730.62 321.64,738.97 321.76,725.97 321.88,733.69 322.00,733.63 322.12,735.06 322.24,735.21 322.36,737.82 322.48,740.47 322.60,740.44 322.72,736.59 322.84,735.14 322.96,741.15 323.08,735.71 323.20,736.07 323.32,738.27 323.44,746.49 323.56,749.63 323.68,743.56 323.80,743.04 323.92,747.18 324.04,747.80 324.16,750.13 324.28,753.37 324.40,756.03 324.52,748.01 324.64,749.86 324.76,750.83 324.88,747.97 325.00,750.21 325.12,749.09 325.24,752.56 325.36,756.47 325.48,752.43 325.60,752.79 325.72,753.62 325.84,758.12 325.96,762.46 326.08,755.94 326.20,760.07 326.32,758.59 326.44,761.61 326.56,765.04 326.68,765.19 326.80,756.17 326.92,755.13 327.04,759.19 327.16,765.47 327.28,762.15 327.40,765.23 327.52,762.38 327.64,759.79 327.76,763.49 327.88,766.85 328.00,759.74 328.12,767.11 328.24,759.90 328.36,760.77 328.48,762.02 328.60,765.30 328.72,766.04 328.84,763.38 328.96,764.37 329.08,765.64 329.20,765.40 329.32,768.63 329.44,761.31 329.56,768.74 329.68,763.22 329.80,768.25 329.92,766.63 330.04,765.95 330.16,760.56 330.28,761.49 330.40,759.71 330.52,763.50 330.64,760.21 330.76,769.00 330.88,763.10 331.00,763.95 331.12,761.41 331.24,761.22 331.36,769.35 331.48,768.10 331.60,766.09 331.72,769.47 331.84,767.47 331.96,762.34 332.08,765.85 332.20,768.64 332.32,759.22 332.44,767.17 332.56,759.05 332.68,765.22 332.80,762.58 332.92,768.54 333.04,769.37 333.16,761.46 333.28,765.24 333.40,764.20 333.52,762.62 333.64,760.88 333.76,760.97 333.88,767.08 334.00,768.05 334.12,763.53 334.24,762.00 334.36,765.76 334.48,761.68 334.60,764.02 334.72,762.47 334.84,768.24 334.96,766.08 335.08,767.31 335.20,768.17 335.32,761.16 335.44,765.91 335.56,762.18 335.68,761.33 335.80,762.69 335.92,764.54 336.04,767.57 336.16,767.58 336.28,763.23 336.40,767.26 336.52,769.39 336.64,763.46 336.76,762.96 336.88,762.63 337.00,768.67 337.12,770.00 337.24,763.49 337.36,767.63 337.48,766.51 337.60,760.89 337.72,761.92 337.84,769.22 337.96,762.40 338.08,765.51 338.20,764.07 338.32,765.75 338.44,761.51 338.56,764.34 338.68,762.99 338.80,762.69 338.92,765.25 339.04,768.21 339.16,764.96 339.28,769.86 339.40,761.54 339.52,766.89 339.64,760.88 339.76,769.63 339.88,765.18 340.00,763.52 340.12,768.05 340.24,764.91 340.36,764.48 340.48,770.20 340.60,763.43 340.72,761.90 340.84,761.26 340.96,765.89 341.08,762.25 341.20,768.23 341.32,763.95 341.44,763.00 341.56,761.74 341.68,768.00 341.80,769.65 341.92,770.17 342.04,763.48 342.16,767.77 342.28,761.89 342.40,770.20 342.52,768.75 342.64,763.09 342.76,765.31 342.88,762.10 343.00,763.83 343.12,768.08 343.24,762.50 343.36,768.86 343.48,763.10 343.60,766.71 343.72,770.17 343.84,769.14 343.96,763.30 344.08,764.39 344.20,764.43 344.32,762.92 344.44,764.76 344.56,769.54 344.68,763.10 344.80,768.71 344.92,767.95 345.04,768.80 345.16,767.23 345.28,769.08 345.40,766.07 345.52,768.89 345.64,769.12 345.76,769.48 345.88,770.07 346.00,767.46 346.12,761.16 346.24,766.17 346.36,764.08 346.48,768.52 346.60,762.83 346.72,763.18 346.84,763.96 346.96,768.67 347.08,761.40 347.20,768.12 347.32,765.32 347.44,768.73 347.56,763.80 347.68,769.66 347.80,769.71 347.92,763.82 348.04,766.45 348.16,766.59 348.28,765.90 348.40,764.88 348.52,767.38 348.64,764.34 348.76,770.31 348.88,761.96 349.00,761.07 349.12,765.05 349.24,765.02 349.36,765.96 349.48,768.62 349.60,762.95 349.72,768.75 349.84,769.57 349.96,765.07 350.08,767.84 350.20,762.75 350.32,764.02 350.44,762.60 350.56,765.74 350.68,762.18 350.80,770.76 350.92,768.71 351.04,769.86 351.16,768.35 351.28,764.37 351.40,762.82 351.52,765.78 351.64,769.77 351.76,765.87 351.88,766.36 352.00,767.07 352.12,765.00 352.24,763.35 352.36,764.96 352.48,765.44 352.60,760.81 352.72,767.94 352.84,763.13 352.96,765.93 353.08,766.80 353.20,762.78 353.32,767.98 353.44,767.89 353.56,763.49 353.68,770.03 353.80,770.22 353.92,761.63 354.04,768.74 354.16,762.19 354.28,767.16 354.40,764.13 354.52,763.22 354.64,762.38 354.76,766.96 354.88,762.39 355.00,761.62 355.12,763.93 355.24,762.61 355.36,765.18 355.48,765.64 355.60,765.49 355.72,766.70 355.84,762.47 355.96,767.80 356.08,764.81 356.20,765.03 356.32,767.69 356.44,762.30 356.56,762.96 356.68,768.07 356.80,767.09 356.92,764.80 357.04,763.77 357.16,767.41 357.28,770.28 357.40,764.44 357.52,768.70 357.64,767.56 357.76,770.24 357.88,764.81 358.00,761.94 358.12,768.80 358.24,764.02 358.36,765.75 358.48,769.75 358.60,766.11 358.72,767.18 358.84,764.12 358.96,766.88 359.08,763.40 359.20,764.67 359.32,769.93 359.44,763.55 359.56,769.01 359.68,767.69 359.80,762.72 359.92,768.85 360.04,763.07 360.16,763.43 360.28,768.00 360.40,770.27 360.52,770.02 360.64,770.05 360.76,762.72 360.88,769.38 361.00,761.72 361.12,768.33 361.24,770.57 361.36,761.35 361.48,761.01 361.60,767.10 361.72,762.41 361.84,766.89 361.96,770.50 362.08,770.59 362.20,764.71 362.32,763.12 362.44,770.75 362.56,762.55 362.68,762.32 362.80,768.17 362.92,766.10 363.04,761.13 363.16,768.71 363.28,765.31 363.40,766.81 363.52,764.76 363.64,769.40 363.76,766.41 363.88,762.55 364.00,764.30 364.12,768.66 364.24,760.85 364.36,764.94 364.48,766.50 364.60,764.89 364.72,770.36 364.84,766.95 364.96,764.56 365.08,769.84 365.20,768.68 365.32,770.71 365.44,763.98 365.56,763.42 365.68,762.38 365.80,765.69 365.92,770.03 366.04,770.10 366.16,762.29 366.28,766.53 366.40,766.67 366.52,770.14 366.64,768.57 366.76,763.56 366.88,769.51 367.00,768.06 367.12,768.10 367.24,761.77 367.36,768.02 367.48,767.34 367.60,764.50 367.72,770.23 367.84,765.07 367.96,768.88 368.08,765.36 368.20,764.81 368.32,765.53 368.44,768.29 368.56,767.59 368.68,770.68 368.80,768.20 368.92,767.17 369.04,763.29 369.16,761.13 369.28,761.66 369.40,769.73 369.52,765.44 369.64,767.98 369.76,764.23 369.88,762.65 370.00,768.94 370.12,762.65 370.24,764.16 370.36,770.10 370.48,768.66 370.60,769.92 370.72,769.86 370.84,770.51 370.96,767.10 371.08,769.34 371.20,761.78 371.32,768.85 371.44,768.24 371.56,765.43 371.68,770.42 371.80,762.40 371.92,766.33 372.04,762.47 372.16,765.49 372.28,763.47 372.40,766.33 372.52,766.69 372.64,769.65 372.76,770.39 372.88,762.19 373.00,770.46 373.12,766.26 373.24,761.07 373.36,762.03 373.48,767.08 373.60,770.27 373.72,764.41 373.84,767.13 373.96,769.41 374.08,764.39 374.20,763.79 374.32,763.23 374.44,758.77 374.56,762.84 374.68,761.97 374.80,767.48 374.92,770.05 375.04,767.57 375.16,760.80 375.28,765.05 375.40,763.91 375.52,760.87 375.64,769.81 375.76,767.42 375.88,762.57 376.00,761.80 376.12,763.45 376.24,765.94 376.36,770.45 376.48,767.75 376.60,769.06 376.72,761.86 376.84,763.46 376.96,764.40 377.08,770.29 377.20,770.69 377.32,767.29 377.44,768.01 377.56,764.34 377.68,763.30 377.80,762.33 377.92,766.64 378.04,762.35 378.16,766.49 378.28,764.88 378.40,760.90 378.52,764.97 378.64,768.32 378.76,768.99 378.88,761.67 379.00,764.62 379.12,768.40 379.24,767.45 379.36,765.27 379.48,769.98 379.60,762.55 379.72,761.56 379.84,761.63 379.96,764.98 380.08,765.86 380.20,763.18 380.32,763.79 380.44,769.84 380.56,765.03 380.68,761.19 380.80,769.21 380.92,762.30 381.04,761.32 381.16,764.09 381.28,768.16 381.40,765.84 381.52,767.43 381.64,767.34 381.76,768.09 381.88,764.71 382.00,761.60 382.12,770.67 382.24,763.39 382.36,762.95 382.48,767.61 382.60,762.28 382.72,766.15 382.84,769.92 382.96,765.74 383.08,762.66 383.20,765.68 383.32,763.64 383.44,768.86 383.56,762.13 383.68,761.98 383.80,767.69 383.92,770.48 384.04,767.87 384.16,761.84 384.28,761.25 384.40,767.94 384.52,767.67 384.64,767.83 384.76,770.49 384.88,760.74 385.00,767.97 385.12,767.07 385.24,769.43 385.36,761.85 385.48,766.29 385.60,764.24 385.72,770.67 385.84,769.79 385.96,769.35 386.08,770.39 386.20,770.18 386.32,762.66 386.44,765.52 386.56,764.43 386.68,766.57 386.80,763.46 386.92,765.73 387.04,767.33 387.16,766.00 387.28,768.39 387.40,768.49 387.52,763.17 387.64,765.79 387.76,763.58 387.88,767.77 388.00,765.50 388.12,762.80 388.24,764.25 388.36,764.26 388.48,768.01 388.60,763.00 388.72,767.21 388.84,767.02 388.96,763.39 389.08,764.27 389.20,770.29 389.32,767.36 389.44,768.71 389.56,764.02 389.68,768.61 389.80,765.53 389.92,763.35 390.04,767.77 390.16,769.14 390.28,765.04 390.40,763.78 390.52,762.47 390.64,763.45 390.76,769.17 390.88,769.16 391.00,764.91 391.12,768.36 391.24,761.82 391.36,765.03 391.48,766.58 391.60,760.82 391.72,762.30 391.84,768.24 391.96,767.42 392.08,762.50 392.20,767.36 392.32,763.55 392.44,769.17 392.56,762.94 392.68,766.36 392.80,760.97 392.92,767.05 393.04,765.70 393.16,762.72 393.28,764.76 393.40,769.62 393.52,770.46 393.64,769.16 393.76,766.46 393.88,760.96 394.00,768.69 394.12,768.35 394.24,770.45 394.36,764.38 394.48,766.82 394.60,769.00 394.72,764.44 394.84,761.61 394.96,768.09 395.08,770.50 395.20,765.17 395.32,760.57 395.44,761.45 395.56,764.87 395.68,763.43 395.80,765.70 395.92,762.23 396.04,765.47 396.16,769.15 396.28,769.31 396.40,763.88 396.52,766.16 396.64,761.36 396.76,764.21 396.88,767.08 397.00,763.78 397.12,768.96 397.24,764.67 397.36,764.10 397.48,762.11 397.60,767.14 397.72,764.54 397.84,768.39 397.96,768.80 398.08,767.81 398.20,762.66 398.32,767.29 398.44,765.43 398.56,762.43 398.68,766.91 398.80,763.03 398.92,761.80 399.04,762.15 399.16,763.57 399.28,761.76 399.40,766.59 399.52,763.50 399.64,765.87 399.76,768.21 399.88,762.62 400.00,768.70 400.12,767.93 400.24,764.87 400.36,768.61 400.48,761.43 400.60,760.69 400.72,770.09 400.84,763.02 400.96,762.11 401.08,761.88 401.20,764.73 401.32,767.22 401.44,768.95 401.56,769.31 401.68,760.55 401.80,760.94 401.92,766.53 402.04,761.87 402.16,763.05 402.28,769.33 402.40,770.17 402.52,768.21 402.64,769.52 402.76,767.56 402.88,761.12 403.00,765.73 403.12,768.83 403.24,767.19 403.36,768.05 403.48,762.13 403.60,762.96 403.72,768.47 403.84,767.09 403.96,762.36 404.08,769.67 404.20,765.20 404.32,760.33 404.44,767.54 404.56,763.63 404.68,763.52 404.80,766.62 404.92,765.27 405.04,769.21 405.16,765.06 405.28,761.94 405.40,763.48 405.52,760.87 405.64,766.29 405.76,763.67 405.88,762.05 406.00,759.86 406.12,762.38 406.24,765.36 406.36,766.08 406.48,767.58 406.60,768.42 406.72,766.54 406.84,764.08 406.96,769.26 407.08,760.65 407.20,764.74 407.32,761.81 407.44,763.46 407.56,761.37 407.68,761.41 407.80,764.88 407.92,764.51 408.04,759.57 408.16,761.37 408.28,767.07 408.40,764.71 408.52,767.13 408.64,766.54 408.76,764.94 408.88,762.87 409.00,759.72 409.12,766.00 409.24,764.53 409.36,759.93 409.48,767.65 409.60,761.30 409.72,761.28 409.84,763.61 409.96,761.62 410.08,762.26 410.20,765.74 410.32,758.60 410.44,759.32 410.56,766.04 410.68,760.12 410.80,765.58 410.92,767.22 411.04,760.77 411.16,767.09 411.28,761.74 411.40,764.90 411.52,761.70 411.64,760.75 411.76,760.50 411.88,761.78 412.00,761.62 412.12,761.09 412.24,755.76 412.36,763.64 412.48,754.15 412.60,760.09 412.72,757.84 412.84,755.43 412.96,759.28 413.08,757.65 413.20,757.03 413.32,753.87 413.44,754.62 413.56,748.56 413.68,749.21 413.80,748.27 413.92,752.62 414.04,750.52 414.16,751.51 414.28,747.75 414.40,740.09 414.52,742.25 414.64,736.29 414.76,736.72 414.88,736.04 415.00,732.51 415.12,731.94 415.24,736.45 415.36,733.88 415.48,724.29 415.60,726.92 415.72,722.32 415.84,727.98 415.96,718.94 416.08,721.27 416.20,726.36 416.32,721.24 416.44,713.81 416.56,724.88 416.68,720.45 416.80,713.72 416.92,714.63 417.04,720.89 417.16,716.14 417.28,715.65 417.40,719.41 417.52,719.00 417.64,725.78 417.76,731.03 417.88,725.49 418.00,734.35 418.12,734.77 418.24,738.86 418.36,736.33 418.48,732.09 418.60,740.76 418.72,742.67 418.84,741.64 418.96,742.48 419.08,745.65 419.20,743.56 419.32,742.81 419.44,748.68 419.56,745.71 419.68,751.14 419.80,750.80 419.92,757.42 420.04,759.29 420.16,760.23 420.28,753.22 420.40,757.73 420.52,762.48 420.64,761.12 420.76,754.04 420.88,755.58 421.00,760.65 421.12,759.49 421.24,756.09 421.36,756.55 421.48,762.49 421.60,756.55 421.72,766.23 421.84,760.98 421.96,763.98 422.08,763.70 422.20,763.05 422.32,759.32 422.44,767.39 422.56,767.80 422.68,766.36 422.80,765.49 422.92,767.58 423.04,767.07 423.16,766.22 423.28,761.49 423.40,766.49 423.52,767.03 423.64,760.26 423.76,764.35 423.88,762.07 424.00,760.29 424.12,761.04 424.24,762.15 424.36,761.93 424.48,760.60 424.60,759.21 424.72,758.91 424.84,761.35 424.96,759.33 425.08,766.28 425.20,764.24 425.32,762.08 425.44,762.97 425.56,768.18 425.68,767.82 425.80,766.47 425.92,766.34 426.04,767.54 426.16,764.82 426.28,763.43 426.40,766.56 426.52,767.29 426.64,765.50 426.76,767.67 426.88,762.79 427.00,763.27 427.12,762.90 427.24,768.93 427.36,766.25 427.48,767.42 427.60,764.26 427.72,762.83 427.84,765.87 427.96,762.16 428.08,768.64 428.20,761.05 428.32,763.06 428.44,769.73 428.56,767.69 428.68,761.48 428.80,761.50 428.92,761.86 429.04,763.90 429.16,763.93 429.28,767.61 429.40,762.18 429.52,764.74 429.64,766.29 429.76,763.06 429.88,769.83 430.00,761.92 430.12,760.40 430.24,768.24 430.36,769.55 430.48,765.74 430.60,759.99 430.72,762.50 430.84,760.54 430.96,763.65 431.08,763.95 431.20,767.23 431.32,765.90 431.44,765.91 431.56,769.80 431.68,760.37 431.80,766.59 431.92,769.15 432.04,768.90 432.16,765.71 432.28,762.90 432.40,766.12 432.52,765.38 432.64,765.62 432.76,765.62 432.88,760.24 433.00,765.48 433.12,769.66 433.24,764.74 433.36,765.30 433.48,767.48 433.60,768.74 433.72,767.88 433.84,766.46 433.96,762.35 434.08,762.23 434.20,765.26 434.32,763.22 434.44,769.53 434.56,769.50 434.68,765.14 434.80,763.43 434.92,761.72 435.04,767.72 435.16,760.15 435.28,764.90 435.40,761.60 435.52,763.94 435.64,769.26 435.76,763.26 435.88,761.30 436.00,766.98 436.12,761.18 436.24,765.04 436.36,768.18 436.48,762.13 436.60,768.07 436.72,759.96 436.84,768.22 436.96,767.62 437.08,766.29 437.20,769.81 437.32,768.29 437.44,763.08 437.56,766.79 437.68,765.61 437.80,762.45 437.92,761.28 438.04,768.82 438.16,766.90 438.28,761.13 438.40,767.58 438.52,760.88 438.64,767.62 438.76,768.05 438.88,760.94 439.00,768.68 439.12,760.59 439.24,760.76 439.36,760.67 439.48,766.48 439.60,763.92 439.72,760.11 439.84,762.22 439.96,766.94 440.08,765.10 440.20,761.02 440.32,762.67 440.44,767.13 440.56,762.96 440.68,768.35 440.80,764.48 440.92,768.89 441.04,764.12 441.16,768.24 441.28,762.14 441.40,764.56 441.52,761.05 441.64,769.42 441.76,763.25 441.88,768.36 442.00,760.56 442.12,766.74 442.24,765.89 442.36,764.37 442.48,763.62 442.60,768.29 442.72,768.38 442.84,768.70 442.96,768.20 443.08,767.64 443.20,768.78 443.32,767.25 443.44,762.33 443.56,760.60 443.68,763.11 443.80,760.22 443.92,765.60 444.04,768.04 444.16,761.72 444.28,763.68 444.40,767.36 444.52,761.23 444.64,758.01 444.76,763.20 444.88,767.22 445.00,760.46 445.12,758.41 445.24,762.63 445.36,760.71 445.48,759.35 445.60,760.53 445.72,761.57 445.84,755.91 445.96,758.80 446.08,764.41 446.20,763.01 446.32,760.14 446.44,754.50 446.56,761.04 446.68,757.62 446.80,762.17 446.92,753.57 447.04,759.77 447.16,752.65 447.28,752.20 447.40,758.51 447.52,756.15 447.64,752.85 447.76,759.68 447.88,758.19 448.00,758.89 448.12,756.76 448.24,755.31 448.36,759.77 448.48,754.20 448.60,748.68 448.72,749.81 448.84,746.77 448.96,756.65 449.08,754.44 449.20,748.11 449.32,748.48 449.44,748.68 449.56,751.01 449.68,755.74 449.80,751.73 449.92,742.91 450.04,747.00 450.16,745.64 450.28,751.22 450.40,750.46 450.52,740.76 450.64,742.69 450.76,739.43 450.88,747.74 451.00,746.98 451.12,747.89 451.24,740.52 451.36,745.38 451.48,739.67 451.60,741.27 451.72,741.01 451.84,743.80 451.96,745.60 452.08,745.59 452.20,736.35 452.32,741.83 452.44,746.68 452.56,738.15 452.68,743.65 452.80,737.34 452.92,744.93 453.04,737.91 453.16,739.29 453.28,733.47 453.40,733.65 453.52,736.75 453.64,734.49 453.76,734.48 453.88,736.28 454.00,739.02 454.12,740.15 454.24,742.95 454.36,745.71 454.48,740.78 454.60,737.61 454.72,745.47 454.84,734.61 454.96,745.73 455.08,743.28 455.20,741.15 455.32,738.78 455.44,743.32 455.56,743.00 455.68,748.10 455.80,744.61 455.92,738.91 456.04,737.50 456.16,738.14 456.28,737.40 456.40,747.98 456.52,739.68 456.64,743.38 456.76,741.97 456.88,750.48 457.00,750.91 457.12,741.25 457.24,751.24 457.36,750.38 457.48,749.45 457.60,741.51 457.72,741.94 457.84,750.20 457.96,750.07 458.08,751.27 458.20,753.90 458.32,752.64 458.44,753.11 458.56,750.19 458.68,749.88 458.80,754.72 458.92,749.84 459.04,756.45 459.16,746.48 459.28,754.50 459.40,746.44 459.52,751.76 459.64,756.48 459.76,747.67 459.88,750.80 460.00,749.58 460.12,756.80 460.24,750.33 460.36,756.49 460.48,750.75 460.60,757.92 460.72,750.48 460.84,751.27 460.96,759.68 461.08,751.09 461.20,756.27 461.32,752.68 461.44,760.05 461.56,761.03 461.68,754.60 461.80,756.86 461.92,758.21 462.04,757.73 462.16,762.97 462.28,752.73 462.40,756.02 462.52,757.25 462.64,762.67 462.76,762.31 462.88,760.82 463.00,756.40 463.12,755.48 463.24,759.61 463.36,755.21 463.48,762.09 463.60,763.72 463.72,755.78 463.84,761.12 463.96,760.35 464.08,758.99 464.20,763.16 464.32,760.42 464.44,758.74 464.56,759.52 464.68,757.99 464.80,758.02 464.92,757.25 465.04,757.87 465.16,763.39 465.28,753.56 465.40,757.36 465.52,759.29 465.64,751.99 465.76,762.66 465.88,757.73 466.00,753.47 466.12,761.30 466.24,755.25 466.36,760.64 466.48,756.34 466.60,760.38 466.72,760.84 466.84,757.98 466.96,759.05 467.08,753.06 467.20,758.85 467.32,759.44 467.44,755.81 467.56,760.27 467.68,751.54 467.80,754.57 467.92,759.49 468.04,750.98 468.16,752.94 468.28,752.45 468.40,757.12 468.52,755.82 468.64,757.75 468.76,751.06 468.88,748.43 469.00,753.25 469.12,749.92 469.24,747.20 469.36,747.18 469.48,751.24 469.60,749.62 469.72,749.75 469.84,751.14 469.96,745.11 470.08,751.09 470.20,742.96 470.32,742.41 470.44,743.47 470.56,742.71 470.68,741.72 470.80,746.05 470.92,745.25 471.04,744.79 471.16,740.59 471.28,735.11 471.40,740.35 471.52,737.10 471.64,733.94 471.76,728.82 471.88,732.70 472.00,723.92 472.12,726.89 472.24,723.35 472.36,727.64 472.48,720.48 472.60,718.19 472.72,716.80 472.84,719.56 472.96,718.51 473.08,707.86 473.20,706.13 473.32,707.79 473.44,706.00 473.56,699.68 473.68,702.82 473.80,692.23 473.92,691.87 474.04,687.51 474.16,687.37 474.28,683.78 474.40,679.67 474.52,685.65 474.64,679.16 474.76,671.27 474.88,676.45 475.00,668.90 475.12,660.63 475.24,666.22 475.36,653.81 475.48,656.43 475.60,647.39 475.72,643.26 475.84,641.58 475.96,641.20 476.08,641.09 476.20,634.75 476.32,634.20 476.44,624.57 476.56,629.62 476.68,620.65 476.80,622.89 476.92,620.25 477.04,614.24 477.16,615.11 477.28,606.22 477.40,607.66 477.52,605.63 477.64,606.18 477.76,608.00 477.88,600.74 478.00,606.72 478.12,604.73 478.24,604.55 478.36,595.62 478.48,595.37 478.60,598.55 478.72,601.86 478.84,604.78 478.96,606.92 479.08,601.92 479.20,609.07 479.32,605.66 479.44,604.68 479.56,610.62 479.68,611.25 479.80,615.79 479.92,622.94 480.04,623.14 480.16,627.96 480.28,626.93 480.40,626.32 480.52,635.87 480.64,630.05 480.76,644.00 480.88,645.23 481.00,645.27 481.12,646.72 481.24,646.07 481.36,649.45 481.48,659.48 481.60,664.25 481.72,668.85 481.84,661.14 481.96,673.25 482.08,673.41 482.20,672.06 482.32,683.63 482.44,680.73 482.56,682.20 482.68,690.72 482.80,687.99 482.92,692.69 483.04,693.87 483.16,699.94 483.28,700.98 483.40,702.93 483.52,699.41 483.64,709.36 483.76,712.92 483.88,709.30 484.00,716.50 484.12,720.15 484.24,711.61 484.36,713.60 484.48,717.80 484.60,720.61 484.72,726.91 484.84,724.44 484.96,722.97 485.08,724.46 485.20,731.89 485.32,731.39 485.44,724.76 485.56,725.45 485.68,735.01 485.80,735.13 485.92,727.71 486.04,728.40 486.16,731.03 486.28,732.36 486.40,731.21 486.52,732.08 486.64,731.10 486.76,727.53 486.88,721.89 487.00,726.40 487.12,727.19 487.24,725.07 487.36,718.85 487.48,713.84 487.60,718.39 487.72,704.49 487.84,704.38 487.96,697.62 488.08,695.51 488.20,690.47 488.32,683.44 488.44,682.39 488.56,670.40 488.68,671.71 488.80,667.48 488.92,654.07 489.04,648.91 489.16,638.37 489.28,639.47 489.40,627.61 489.52,620.75 489.64,618.52 489.76,603.42 489.88,594.39 490.00,600.81 490.12,588.84 490.24,583.45 490.36,586.15 490.48,588.04 490.60,584.71 490.72,578.27 490.84,591.25 490.96,587.27 491.08,597.85 491.20,597.14 491.32,602.64 491.44,611.62 491.56,619.81 491.68,623.44 491.80,626.46 491.92,631.95 492.04,646.20 492.16,657.85 492.28,656.60 492.40,668.61 492.52,668.86 492.64,683.74 492.76,685.01 492.88,697.91 493.00,692.78 493.12,706.14 493.24,704.86 493.36,711.94 493.48,724.28 493.60,718.55 493.72,722.57 493.84,729.41 493.96,731.23 494.08,735.55 494.20,737.26 494.32,738.67 494.44,739.23 494.56,745.60 494.68,750.20 494.80,749.87 494.92,747.29 495.04,750.92 495.16,750.53 495.28,753.64 495.40,751.79 495.52,752.96 495.64,758.05 495.76,755.22 495.88,752.39 496.00,758.15 496.12,758.14 496.24,755.55 496.36,756.42 496.48,761.16 496.60,756.25 496.72,753.75 496.84,758.23 496.96,760.09 497.08,759.55 497.20,754.64 497.32,754.81 497.44,761.17 497.56,763.66 497.68,764.93 497.80,761.72 497.92,758.33 498.04,755.92 498.16,759.30 498.28,761.30 498.40,759.45 498.52,764.76 498.64,764.63 498.76,762.22 498.88,761.51 499.00,766.50 499.12,764.80 499.24,758.96 499.36,766.04 499.48,764.16 499.60,760.63 499.72,761.40 499.84,761.70 499.96,768.14 500.08,764.36 500.20,759.66 500.32,766.78 500.44,766.71 500.56,758.99 500.68,767.42 500.80,764.24 500.92,767.76 501.04,758.56 501.16,763.51 501.28,767.48 501.40,769.43 501.52,768.92 501.64,760.52 501.76,762.04 501.88,763.28 502.00,760.54 502.12,761.29 502.24,765.06 502.36,765.37 502.48,763.60 502.60,767.77 502.72,769.27 502.84,768.95 502.96,766.25 503.08,766.25 503.20,761.60 503.32,761.93 503.44,767.94 503.56,766.99 503.68,768.12 503.80,767.14 503.92,766.65 504.04,763.74 504.16,769.77 504.28,770.51 504.40,763.86 504.52,761.85 504.64,766.73 504.76,770.49 504.88,767.81 505.00,769.34 505.12,761.52 505.24,769.51 505.36,762.73 505.48,768.25 505.60,761.90 505.72,761.81 505.84,765.62 505.96,761.86 506.08,764.32 506.20,766.08 506.32,761.70 506.44,769.41 506.56,762.07 506.68,771.12 506.80,764.18 506.92,771.10 507.04,767.23 507.16,763.42 507.28,768.48 507.40,768.62 507.52,766.15 507.64,762.56 507.76,771.10 507.88,763.23 508.00,764.23 508.12,764.55 508.24,770.78 508.36,766.43 508.48,765.25 508.60,769.43 508.72,766.54 508.84,770.73 508.96,764.14 509.08,769.23 509.20,768.10 509.32,770.41 509.44,768.26 509.56,765.36 509.68,763.74 509.80,771.88 509.92,763.91 510.04,768.99 510.16,763.35 510.28,768.79 510.40,763.95 510.52,765.58 510.64,768.51 510.76,772.72 510.88,767.50 511.00,771.70 511.12,771.03 511.24,770.53 511.36,772.99 511.48,771.02 511.60,769.12 511.72,765.77 511.84,765.70 511.96,768.41 512.08,770.62 512.20,773.48 512.32,771.60 512.44,770.32 512.56,773.06 512.68,767.24 512.80,768.40 512.92,766.80 513.04,768.59 513.16,765.48 513.28,767.28 513.40,769.12 513.52,762.50 513.64,773.58 513.76,767.41 513.88,771.35 514.00,770.51 514.12,766.02 514.24,767.98 514.36,773.68 514.48,769.79 514.60,770.48 514.72,772.37 514.84,764.45 514.96,769.47" fill="none" stroke="#000" stroke-width="1" shape-rendering="crispEdges"/><polyline points="76.00,772.44 76.50,772.38 77.00,772.31 77.50,772.25 78.00,772.18 78.50,772.12 79.00,772.05 79.50,771.98 80.00,771.91 80.50,771.84 81.00,771.77 81.50,771.70 82.00,771.62 82.50,771.54 83.00,771.46 83.50,771.37 84.00,771.27 84.50,771.16 85.00,771.03 85.50,770.88 86.00,770.66 86.50,770.31 87.00,769.67 87.50,768.51 88.00,766.69 88.50,764.31 89.00,762.08 89.50,761.37 90.00,762.72 90.50,765.01 91.00,767.09 91.50,768.51 92.00,769.30 92.50,769.67 93.00,769.83 93.50,769.88 94.00,769.88 94.50,769.86 95.00,769.82 95.50,769.77 96.00,769.70 96.50,769.61 97.00,769.50 97.50,769.33 98.00,769.05 98.50,768.49 99.00,767.49 99.50,765.94 100.00,764.01 100.50,762.89 101.00,763.40 101.50,765.04 102.00,766.69 102.50,767.84 103.00,768.48 103.50,768.79 104.00,768.92 104.50,768.97 105.00,769.00 105.50,768.99 106.00,768.97 106.50,768.92 107.00,768.80 107.50,768.56 108.00,768.04 108.50,767.08 109.00,765.64 109.50,764.06 110.00,763.29 110.50,764.04 111.00,765.59 111.50,767.01 112.00,767.94 112.50,768.43 113.00,768.65 113.50,768.72 114.00,768.73 114.50,768.71 115.00,768.64 115.50,768.51 116.00,768.25 116.50,767.70 117.00,766.55 117.50,764.52 118.00,761.61 118.50,758.72 119.00,757.79 119.50,759.70 120.00,762.72 120.50,765.24 121.00,766.78 121.50,767.41 122.00,767.22 122.50,765.95 123.00,763.42 123.50,760.86 124.00,761.29 124.50,764.17 125.00,766.62 125.50,767.88 126.00,768.37 126.50,768.56 127.00,768.65 127.50,768.70 128.00,768.73 128.50,768.74 129.00,768.73 129.50,768.71 130.00,768.66 130.50,768.59 131.00,768.46 131.50,768.19 132.00,767.46 132.50,765.77 133.00,762.97 133.50,760.71 134.00,761.78 134.50,764.64 135.00,766.77 135.50,767.76 136.00,768.09 136.50,768.18 137.00,768.17 137.50,768.12 138.00,768.01 138.50,767.84 139.00,767.58 139.50,767.12 140.00,766.25 140.50,764.59 141.00,761.67 141.50,757.14 142.00,751.32 142.50,745.71 143.00,743.20 143.50,745.69 144.00,751.28 144.50,757.07 145.00,761.57 145.50,764.47 146.00,766.10 146.50,766.93 147.00,767.36 147.50,767.58 148.00,767.70 148.50,767.75 149.00,767.73 149.50,767.62 150.00,767.32 150.50,766.62 151.00,765.15 151.50,762.61 152.00,759.18 152.50,756.13 153.00,755.76 153.50,758.41 154.00,761.86 154.50,764.55 155.00,766.10 155.50,766.73 156.00,766.65 156.50,765.66 157.00,763.15 157.50,758.83 158.00,754.29 158.50,753.76 159.00,757.96 159.50,762.65 160.00,765.67 160.50,767.11 161.00,767.70 161.50,767.97 162.00,768.13 162.50,768.23 163.00,768.30 163.50,768.35 164.00,768.39 164.50,768.42 165.00,768.44 165.50,768.45 166.00,768.46 166.50,768.46 167.00,768.46 167.50,768.46 168.00,768.45 168.50,768.44 169.00,768.43 169.50,768.41 170.00,768.39 170.50,768.36 171.00,768.33 171.50,768.30 172.00,768.26 172.50,768.21 173.00,768.15 173.50,768.08 174.00,767.99 174.50,767.88 175.00,767.75 175.50,767.57 176.00,767.32 176.50,766.92 177.00,766.25 177.50,765.08 178.00,763.07 178.50,759.92 179.00,755.51 179.50,750.22 180.00,745.20 180.50,742.49 181.00,743.70 181.50,748.06 182.00,753.43 182.50,758.27 183.00,761.92 183.50,764.33 184.00,765.79 184.50,766.62 185.00,767.09 185.50,767.38 186.00,767.58 186.50,767.72 187.00,767.83 187.50,767.91 188.00,767.98 188.50,768.04 189.00,768.08 189.50,768.12 190.00,768.15 190.50,768.17 191.00,768.19 191.50,768.21 192.00,768.22 192.50,768.23 193.00,768.23 193.50,768.24 194.00,768.24 194.50,768.24 195.00,768.24 195.50,768.23 196.00,768.23 196.50,768.22 197.00,768.21 197.50,768.20 198.00,768.19 198.50,768.17 199.00,768.15 199.50,768.13 200.00,768.11 200.50,768.08 201.00,768.04 201.50,768.00 202.00,767.96 202.50,767.90 203.00,767.83 203.50,767.74 204.00,767.62 204.50,767.46 205.00,767.23 205.50,766.85 206.00,766.12 206.50,764.68 207.00,762.04 207.50,757.94 208.00,752.83 208.50,748.56 209.00,748.05 209.50,751.73 210.00,756.80 210.50,761.10 211.00,763.93 211.50,765.46 212.00,766.13 212.50,766.28 213.00,765.92 213.50,764.66 214.00,761.95 214.50,757.99 215.00,755.10 215.50,756.54 216.00,760.57 216.50,763.98 217.00,765.88 217.50,766.69 218.00,767.01 218.50,767.15 219.00,767.20 219.50,767.21 220.00,767.18 220.50,767.11 221.00,767.01 221.50,766.86 222.00,766.64 222.50,766.33 223.00,765.83 223.50,764.92 224.00,763.11 224.50,759.56 225.00,753.42 225.50,744.57 226.00,734.82 226.50,728.95 227.00,731.65 227.50,740.57 228.00,750.14 228.50,757.43 229.00,761.93 229.50,764.32 230.00,765.51 230.50,766.13 231.00,766.50 231.50,766.75 232.00,766.93 232.50,767.07 233.00,767.17 233.50,767.25 234.00,767.31 234.50,767.35 235.00,767.38 235.50,767.41 236.00,767.42 236.50,767.42 237.00,767.42 237.50,767.41 238.00,767.40 238.50,767.37 239.00,767.34 239.50,767.31 240.00,767.26 240.50,767.20 241.00,767.14 241.50,767.06 242.00,766.96 242.50,766.85 243.00,766.70 243.50,766.53 244.00,766.32 244.50,766.05 245.00,765.71 245.50,765.25 246.00,764.58 246.50,763.51 247.00,761.60 247.50,758.11 248.00,752.05 248.50,742.56 249.00,729.70 249.50,715.43 250.00,704.59 250.50,703.43 251.00,712.77 251.50,726.83 252.00,740.21 252.50,750.41 253.00,757.10 253.50,761.01 254.00,763.15 254.50,764.35 255.00,765.07 255.50,765.55 256.00,765.91 256.50,766.18 257.00,766.39 257.50,766.57 258.00,766.71 258.50,766.82 259.00,766.92 259.50,767.00 260.00,767.06 260.50,767.12 261.00,767.16 261.50,767.20 262.00,767.23 262.50,767.25 263.00,767.27 263.50,767.29 264.00,767.30 264.50,767.30 265.00,767.30 265.50,767.30 266.00,767.30 266.50,767.28 267.00,767.27 267.50,767.25 268.00,767.22 268.50,767.18 269.00,767.14 269.50,767.08 270.00,767.01 270.50,766.92 271.00,766.80 271.50,766.65 272.00,766.45 272.50,766.15 273.00,765.68 273.50,764.81 274.00,763.06 274.50,759.72 275.00,754.11 275.50,746.38 276.00,738.50 276.50,734.85 277.00,738.50 277.50,746.38 278.00,754.10 278.50,759.71 279.00,763.05 279.50,764.79 280.00,765.66 280.50,766.13 281.00,766.42 281.50,766.62 282.00,766.77 282.50,766.89 283.00,766.98 283.50,767.05 284.00,767.10 284.50,767.15 285.00,767.19 285.50,767.22 286.00,767.24 286.50,767.27 287.00,767.28 287.50,767.30 288.00,767.31 288.50,767.32 289.00,767.33 289.50,767.33 290.00,767.34 290.50,767.34 291.00,767.34 291.50,767.34 292.00,767.34 292.50,767.34 293.00,767.34 293.50,767.34 294.00,767.33 294.50,767.33 295.00,767.33 295.50,767.32 296.00,767.32 296.50,767.31 297.00,767.30 297.50,767.30 298.00,767.29 298.50,767.26 299.00,767.25 299.50,767.24 300.00,767.23 300.50,767.22 301.00,767.22 301.50,767.21 302.00,767.20 302.50,767.19 303.00,767.18 303.50,767.17 304.00,767.16 304.50,767.14 305.00,767.13 305.50,767.12 306.00,767.10 306.50,767.08 307.00,767.05 307.50,767.03 308.00,767.00 308.50,766.97 309.00,766.92 309.50,766.88 310.00,766.84 310.50,766.78 311.00,766.72 311.50,766.65 312.00,766.57 312.50,766.48 313.00,766.36 313.50,766.23 314.00,766.06 314.50,765.84 315.00,765.55 315.50,765.14 316.00,764.53 316.50,763.63 317.00,762.30 317.50,760.40 318.00,757.81 318.50,754.45 319.00,750.37 319.50,745.80 320.00,741.22 320.50,737.38 321.00,735.24 321.50,735.49 322.00,738.04 322.50,742.10 323.00,746.74 323.50,751.23 324.00,755.18 324.50,758.39 325.00,760.84 325.50,762.61 326.00,763.84 326.50,764.68 327.00,765.24 327.50,765.62 328.00,765.90 328.50,766.10 329.00,766.26 329.50,766.39 330.00,766.50 330.50,766.60 331.00,766.68 331.50,766.74 332.00,766.80 332.50,766.86 333.00,766.90 333.50,766.94 334.00,766.98 334.50,767.01 335.00,767.04 335.50,767.07 336.00,767.09 336.50,767.11 337.00,767.13 337.50,767.15 338.00,767.17 338.50,767.18 339.00,767.19 339.50,767.21 340.00,767.22 340.50,767.24 341.00,767.25 341.50,767.26 342.00,767.26 342.50,767.27 343.00,767.28 343.50,767.29 344.00,767.29 344.50,767.30 345.00,767.30 345.50,767.31 346.00,767.31 346.50,767.32 347.00,767.32 347.50,767.32 348.00,767.33 348.50,767.33 349.00,767.33 349.50,767.34 350.00,767.34 350.50,767.34 351.00,767.35 351.50,767.35 352.00,767.35 352.50,767.35 353.00,767.35 353.50,767.36 354.00,767.36 354.50,767.36 355.00,767.36 355.50,767.37 356.00,767.37 356.50,767.37 357.00,767.37 357.50,767.37 358.00,767.37 358.50,767.37 359.00,767.37 359.50,767.37 360.00,767.37 360.50,767.37 361.00,767.37 361.50,767.37 362.00,767.37 362.50,767.37 363.00,767.37 363.50,767.37 364.00,767.37 364.50,767.37 365.00,767.37 365.50,767.37 366.00,767.37 366.50,767.37 367.00,767.37 367.50,767.37 368.00,767.37 368.50,767.37 369.00,767.37 369.50,767.37 370.00,767.37 370.50,767.37 371.00,767.36 371.50,767.35 372.00,767.35 372.50,767.35 373.00,767.35 373.50,767.35 374.00,767.35 374.50,767.35 375.00,767.35 375.50,767.35 376.00,767.34 376.50,767.34 377.00,767.34 377.50,767.34 378.00,767.34 378.50,767.34 379.00,767.34 379.50,767.33 380.00,767.33 380.50,767.33 381.00,767.33 381.50,767.33 382.00,767.32 382.50,767.32 383.00,767.32 383.50,767.32 384.00,767.31 384.50,767.31 385.00,767.31 385.50,767.30 386.00,767.30 386.50,767.30 387.00,767.30 387.50,767.29 388.00,767.29 388.50,767.28 389.00,767.28 389.50,767.28 390.00,767.27 390.50,767.27 391.00,767.26 391.50,767.26 392.00,767.25 392.50,767.25 393.00,767.24 393.50,767.23 394.00,767.23 394.50,767.22 395.00,767.21 395.50,767.20 396.00,767.19 396.50,767.19 397.00,767.18 397.50,767.17 398.00,767.15 398.50,767.14 399.00,767.13 399.50,767.12 400.00,767.10 400.50,767.08 401.00,767.07 401.50,767.05 402.00,767.03 402.50,767.00 403.00,766.98 403.50,766.95 404.00,766.92 404.50,766.88 405.00,766.84 405.50,766.80 406.00,766.75 406.50,766.69 407.00,766.62 407.50,766.55 408.00,766.46 408.50,766.35 409.00,766.23 409.50,766.08 410.00,765.90 410.50,765.68 411.00,765.39 411.50,765.00 412.00,764.42 412.50,763.50 413.00,761.98 413.50,759.50 414.00,755.63 414.50,750.06 415.00,742.79 415.50,734.48 416.00,726.67 416.50,721.92 417.00,722.49 417.50,728.07 418.00,736.15 418.50,744.34 419.00,751.28 419.50,756.49 420.00,760.05 420.50,762.30 421.00,763.66 421.50,764.49 422.00,765.01 422.50,765.37 423.00,765.64 423.50,765.84 424.00,766.00 424.50,766.14 425.00,766.25 425.50,766.34 426.00,766.42 426.50,766.48 427.00,766.54 427.50,766.59 428.00,766.63 428.50,766.66 429.00,766.69 429.50,766.72 430.00,766.74 430.50,766.76 431.00,766.77 431.50,766.78 432.00,766.79 432.50,766.80 433.00,766.81 433.50,766.81 434.00,766.82 434.50,766.82 435.00,766.82 435.50,766.82 436.00,766.82 436.50,766.82 437.00,766.81 437.50,766.81 438.00,766.80 438.50,766.79 439.00,766.79 439.50,766.78 440.00,766.77 440.50,766.76 441.00,766.75 441.50,766.74 442.00,766.72 442.50,766.71 443.00,766.69 443.50,766.68 444.00,766.66 444.50,766.64 445.00,766.62 445.50,766.60 446.00,766.58 446.50,766.56 447.00,766.53 447.50,766.51 448.00,766.48 448.50,766.45 449.00,766.42 449.50,766.39 450.00,766.36 450.50,766.32 451.00,766.29 451.50,766.25 452.00,766.20 452.50,766.16 453.00,766.11 453.50,766.06 454.00,766.01 454.50,765.95 455.00,765.89 455.50,765.83 456.00,765.76 456.50,765.69 457.00,765.61 457.50,765.52 458.00,765.43 458.50,765.34 459.00,765.23 459.50,765.13 460.00,765.01 460.50,764.88 461.00,764.73 461.50,764.58 462.00,764.41 462.50,764.23 463.00,764.04 463.50,763.82 464.00,763.58 464.50,763.32 465.00,763.03 465.50,762.70 466.00,762.34 466.50,761.94 467.00,761.49 467.50,760.98 468.00,760.39 468.50,759.71 469.00,758.90 469.50,757.93 470.00,756.72 470.50,755.22 471.00,753.23 471.50,750.55 472.00,746.91 472.50,741.98 473.00,735.38 473.50,726.71 474.00,715.63 474.50,701.89 475.00,685.45 475.50,666.57 476.00,645.89 476.50,624.55 477.00,604.27 477.50,587.40 478.00,576.57 478.50,573.88 479.00,579.90 479.50,593.34 480.00,611.77 480.50,632.60 481.00,653.70 481.50,673.59 482.00,691.34 482.50,706.47 483.00,718.84 483.50,728.55 484.00,735.88 484.50,741.14 485.00,744.64 485.50,746.56 486.00,746.90 486.50,745.44 487.00,741.71 487.50,735.11 488.00,725.13 488.50,711.67 489.00,695.44 489.50,678.38 490.00,664.04 490.50,657.16 491.00,660.84 491.50,673.64 492.00,691.04 492.50,708.88 493.00,724.62 493.50,737.15 494.00,746.36 494.50,752.70 495.00,756.88 495.50,759.61 496.00,761.42 496.50,762.68 497.00,763.63 497.50,764.38 498.00,765.00 498.50,765.53 499.00,765.99 499.50,766.39 500.00,766.75 500.50,767.07 501.00,767.36 501.50,767.62 502.00,767.86 502.50,768.08 503.00,768.29 503.50,768.48 504.00,768.66 504.50,768.83 505.00,768.98 505.50,769.13 506.00,769.27 506.50,769.41 507.00,769.54 507.50,769.66 508.00,769.78 508.50,769.89 509.00,770.00 509.50,770.10 510.00,770.21 510.50,770.31 511.00,770.40 511.50,770.49 512.00,770.59 512.50,770.67 513.00,770.76 513.50,770.85 514.00,770.93 514.50,771.01 515.00,771.09" fill="none" stroke="#f00" stroke-width="1.5" shape-rendering="crispEdges"/></g></svg></body></html>
